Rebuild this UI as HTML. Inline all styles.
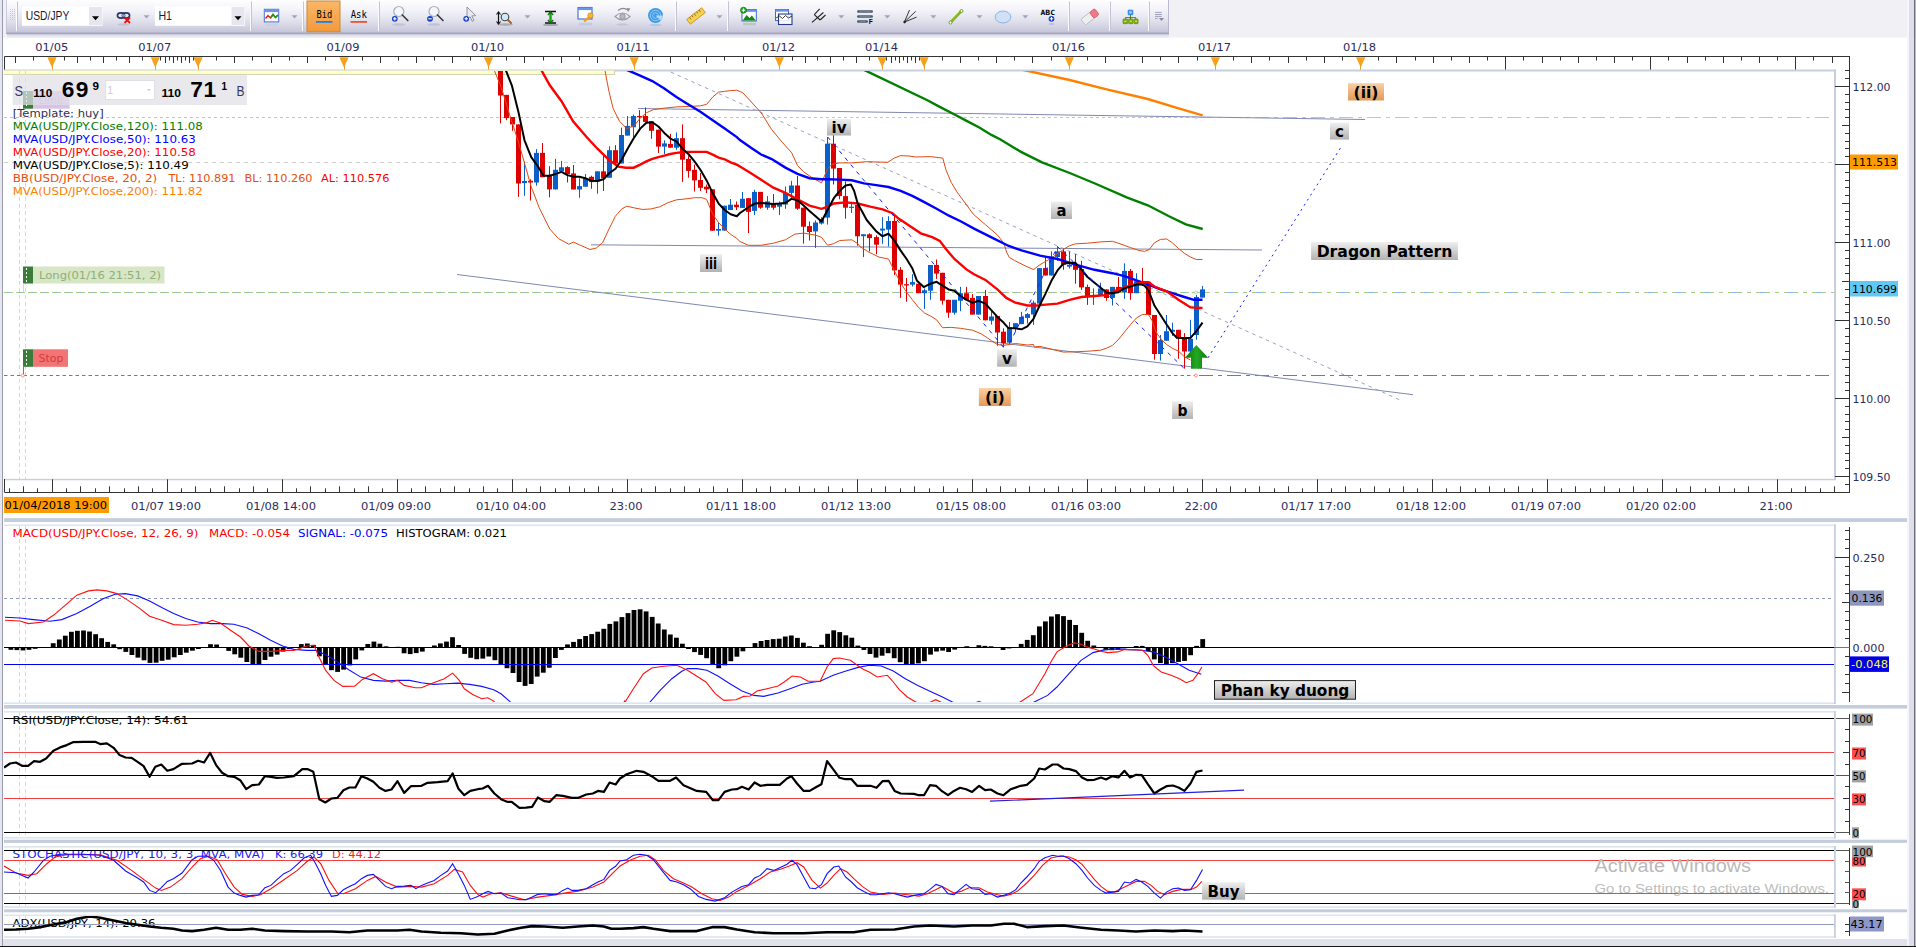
<!DOCTYPE html>
<html lang="en"><head><meta charset="utf-8"><title>USD/JPY H1 chart</title>
<style>html,body{margin:0;padding:0;background:#fff;overflow:hidden}svg{display:block}</style></head>
<body>
<svg width="1916" height="947" viewBox="0 0 1916 947" font-family="'DejaVu Sans', 'Liberation Sans', sans-serif" shape-rendering="auto">
<defs>
<linearGradient id="tb" x1="0" y1="0" x2="0" y2="1"><stop offset="0" stop-color="#fefeff"/><stop offset="0.3" stop-color="#f3f3f9"/><stop offset="0.62" stop-color="#e2e2ed"/><stop offset="1" stop-color="#c4c4d9"/></linearGradient>
<linearGradient id="gl" x1="0" y1="0" x2="0" y2="1"><stop offset="0" stop-color="#efefef"/><stop offset="1" stop-color="#b2b2b2"/></linearGradient>
<linearGradient id="ol" x1="0" y1="0" x2="0" y2="1"><stop offset="0" stop-color="#f8cfa4"/><stop offset="1" stop-color="#e39a58"/></linearGradient>
<linearGradient id="bid" x1="0" y1="0" x2="0" y2="1"><stop offset="0" stop-color="#fbb766"/><stop offset="1" stop-color="#f29a3c"/></linearGradient>
<linearGradient id="ga" x1="0" y1="0" x2="1" y2="0"><stop offset="0" stop-color="#0a7a0a"/><stop offset="0.5" stop-color="#22a822"/><stop offset="1" stop-color="#0a7a0a"/></linearGradient>
<clipPath id="cm"><rect x="4" y="71" width="1830" height="408"/></clipPath>
<clipPath id="cmacd"><rect x="4" y="525" width="1830" height="177"/></clipPath>
<clipPath id="crsi"><rect x="4" y="712" width="1830" height="125"/></clipPath>
<clipPath id="cst"><rect x="4" y="847" width="1830" height="59"/></clipPath>
<clipPath id="cadx"><rect x="4" y="916" width="1830" height="21"/></clipPath>
</defs>
<rect x="0" y="0" width="1916" height="947" fill="#fff" />
<rect x="0" y="0" width="1916" height="37.6" fill="#f0f0f5" />
<rect x="0" y="0" width="2" height="947" fill="#e6e6f0" />
<rect x="2" y="0" width="1" height="947" fill="#9a9aae" />
<rect x="1907" y="0" width="2" height="947" fill="#f6f6fa" />
<rect x="1909" y="0" width="5.5" height="947" fill="#dedeec" />
<rect x="1914.4" y="0" width="1.1" height="947" fill="#1c1c28" />
<rect x="1915.5" y="0" width="0.5" height="947" fill="#e8e8f0" />
<rect x="3" y="939" width="1904" height="7" fill="#e2e2ec" />
<rect x="0" y="946" width="1916" height="1" fill="#15151c" />
<g id="toolbar">
<rect x="7" y="33.8" width="1162" height="1.4" fill="#cdcddd"/><rect x="7" y="35.2" width="1162" height="1.2" fill="#dcdce8"/><rect x="7" y="36.4" width="1162" height="1.2" fill="#e8e8f0"/>
<rect x="6" y="0" width="1163" height="33" fill="url(#tb)"/>
<rect x="6" y="32.6" width="1163" height="1.3" fill="#9e9eba"/>
<rect x="1168.1" y="0" width="0.9" height="33" fill="#b4b4cb"/>
<rect x="6" y="0" width="0.8" height="33" fill="#c4c4d6"/>
<line x1="10.5" y1="9" x2="10.5" y2="21" stroke="#c3c3d3" stroke-width="1" stroke-dasharray="1,1"/>
<line x1="12.5" y1="9" x2="12.5" y2="21" stroke="#c3c3d3" stroke-width="1" stroke-dasharray="1,1"/>
<line x1="14.5" y1="9" x2="14.5" y2="21" stroke="#c3c3d3" stroke-width="1" stroke-dasharray="1,1"/>
<rect x="16" y="1.5" width="1" height="29.5" fill="#fbfbfe"/><rect x="17" y="1.5" width="1" height="29.5" fill="#c3c3d4"/>
<rect x="250" y="1.5" width="1" height="29.5" fill="#fbfbfe"/><rect x="251" y="1.5" width="1" height="29.5" fill="#c3c3d4"/>
<rect x="302" y="1.5" width="1" height="29.5" fill="#fbfbfe"/><rect x="303" y="1.5" width="1" height="29.5" fill="#c3c3d4"/>
<rect x="378" y="1.5" width="1" height="29.5" fill="#fbfbfe"/><rect x="379" y="1.5" width="1" height="29.5" fill="#c3c3d4"/>
<rect x="675" y="1.5" width="1" height="29.5" fill="#fbfbfe"/><rect x="676" y="1.5" width="1" height="29.5" fill="#c3c3d4"/>
<rect x="727" y="1.5" width="1" height="29.5" fill="#fbfbfe"/><rect x="728" y="1.5" width="1" height="29.5" fill="#c3c3d4"/>
<rect x="1068" y="1.5" width="1" height="29.5" fill="#fbfbfe"/><rect x="1069" y="1.5" width="1" height="29.5" fill="#c3c3d4"/>
<rect x="1109" y="1.5" width="1" height="29.5" fill="#fbfbfe"/><rect x="1110" y="1.5" width="1" height="29.5" fill="#c3c3d4"/>
<rect x="1148" y="1.5" width="1" height="29.5" fill="#fbfbfe"/><rect x="1149" y="1.5" width="1" height="29.5" fill="#c3c3d4"/>
<rect x="22" y="6.3" width="80.5" height="19.5" fill="#fff"/>
<rect x="89" y="7" width="13" height="18" fill="#e6e6ef"/>
<path d="M92 16.2 h7 l-3.5 4 Z" fill="#000"/>
<text x="25.8" y="20" font-size="12.5" fill="#17173a" textLength="43.5" lengthAdjust="spacingAndGlyphs" font-family="'Liberation Sans', sans-serif">USD/JPY</text>
<rect x="155" y="6.3" width="90" height="19.5" fill="#fff"/>
<rect x="231.5" y="7" width="13" height="18" fill="#e6e6ef"/>
<path d="M234.5 16.2 h7 l-3.5 4 Z" fill="#000"/>
<text x="158.5" y="20" font-size="12.5" fill="#17173a" textLength="13.5" lengthAdjust="spacingAndGlyphs" font-family="'Liberation Sans', sans-serif">H1</text>
<g><ellipse cx="121" cy="15.5" rx="3.6" ry="2.6" fill="none" stroke="#2a3560" stroke-width="1.6"/><ellipse cx="126" cy="15.5" rx="3.6" ry="2.6" fill="none" stroke="#2a3560" stroke-width="1.6"/><ellipse cx="123.5" cy="15.5" rx="2" ry="1.2" fill="#8aa0d0"/><path d="M124.5 17.5 l5.5 5.5 M130 17.5 l-5.5 5.5" stroke="#e81010" stroke-width="1.8"/><ellipse cx="123.5" cy="24.5" rx="6" ry="1.2" fill="#9aa0b8" opacity="0.4"/></g>
<path d="M143.5 15.3 h6 l-3 3.2 Z" fill="#a4a0c0"/>
<g><rect x="264.3" y="9.3" width="14.4" height="12.6" fill="#fff" stroke="#4a6fd0" stroke-width="1"/><rect x="264.3" y="9.3" width="14.4" height="2.8" fill="#6f94ea"/><polyline points="265.5,18.5 268,15.5 270.5,18 273,14.5 275.5,17.5 278,15" fill="none" stroke="#e02020" stroke-width="1.4"/><polyline points="270.5,18 273,14.5 275.5,17.5 278,15" fill="none" stroke="#10a010" stroke-width="1.4"/><rect x="265" y="23.5" width="13" height="2.5" fill="#c0c8e0" opacity="0.5"/></g>
<path d="M291.5 15.3 h6 l-3 3.2 Z" fill="#a4a0c0"/>
<rect x="307" y="1" width="33" height="30.8" fill="url(#bid)" stroke="#c68a3a" stroke-width="1"/>
<text x="316.6" y="18" font-size="9.8" fill="#000" textLength="15.7" lengthAdjust="spacingAndGlyphs" font-family="'DejaVu Sans Mono', 'Liberation Mono', monospace">Bid</text>
<rect x="316" y="21" width="16.5" height="1.8" fill="#1f7fee"/>
<text x="350.7" y="18" font-size="9.8" fill="#000" textLength="16.3" lengthAdjust="spacingAndGlyphs" font-family="'DejaVu Sans Mono', 'Liberation Mono', monospace">Ask</text>
<rect x="350.5" y="21" width="16.5" height="1.8" fill="#f4502a"/>
<g><circle cx="398.8" cy="11.5" r="5" fill="#f4f6fa" stroke="#aab0bc" stroke-width="1.2"/><path d="M402.3 15 l5.5 5.5" stroke="#3a3a3a" stroke-width="1.7" stroke-linecap="round"/><circle cx="394.8" cy="18.8" r="2.9" fill="#1540c8"/>
<path d="M393.1 18.8 h3.4" stroke="#fff" stroke-width="1.1"/>
<path d="M394.8 17.1 v3.4" stroke="#fff" stroke-width="1.1"/>
<ellipse cx="398.8" cy="24.5" rx="6.5" ry="1.3" fill="#8a90b0" opacity="0.3"/></g>
<g><circle cx="434" cy="11.5" r="5" fill="#f4f6fa" stroke="#aab0bc" stroke-width="1.2"/><path d="M437.5 15 l5.5 5.5" stroke="#3a3a3a" stroke-width="1.7" stroke-linecap="round"/><circle cx="430" cy="18.8" r="2.9" fill="#1540c8"/>
<path d="M428.3 18.8 h3.4" stroke="#fff" stroke-width="1.1"/>
<ellipse cx="434" cy="24.5" rx="6.5" ry="1.3" fill="#8a90b0" opacity="0.3"/></g>
<g><path d="M467 7 l0 12.5 3-2.8 2.2 4.6 1.8-.9 -2.2-4.5 4 -.3 Z" fill="#e8e8ee" stroke="#8a8a98" stroke-width="0.9"/><circle cx="466.2" cy="18.8" r="2.9" fill="#1540c8"/><path d="M464.5 18.8 h3.4 M466.2 17.1 v3.4" stroke="#fff" stroke-width="1.1"/></g>
<g><path d="M498.5 12.5 v11" stroke="#111" stroke-width="1.2"/><path d="M496.5 14.5 l2-2.5 2 2.5 M496.5 21.5 l2 2.5 2-2.5" fill="none" stroke="#111" stroke-width="1.1"/><circle cx="505" cy="17" r="3.8" fill="#cfe8fb" stroke="#444" stroke-width="1.1"/><path d="M508 20 l3 3" stroke="#b05a10" stroke-width="1.8" stroke-linecap="round"/><ellipse cx="505" cy="24.5" rx="8" ry="1.2" fill="#555" opacity="0.35"/></g>
<path d="M524.5 15.3 h6 l-3 3.2 Z" fill="#a4a0c0"/>
<g><path d="M545 11.5 h11 M545 23 h11" stroke="#111" stroke-width="1.3"/><path d="M550.5 12 v11" stroke="#18a018" stroke-width="2.4"/><path d="M547.8 15 l2.7-3 2.7 3 M547.8 20 l2.7 3 2.7-3" fill="none" stroke="#0c700c" stroke-width="1.2"/><ellipse cx="550.5" cy="24.8" rx="8" ry="1.2" fill="#444" opacity="0.35"/></g>
<g><rect x="578" y="7.5" width="14" height="11.5" fill="#fff" stroke="#3c68d8" stroke-width="1.1"/><rect x="578" y="7.5" width="14" height="2.6" fill="#6c94ec"/><circle cx="590.5" cy="15.5" r="2.6" fill="#f8b830" stroke="#d08a10" stroke-width="0.8"/><path d="M588.8 17.3 l-4 3.5" stroke="#f0a020" stroke-width="2.2" stroke-linecap="round"/><rect x="579" y="22.8" width="13" height="2.5" fill="#a8b8e0" opacity="0.45"/></g>
<g><path d="M615 16.5 q7.5-7 15 0 q-7.5 7-15 0 Z" fill="#f0f0f3" stroke="#9a9aa6" stroke-width="1.1"/><circle cx="622.5" cy="16.5" r="2.8" fill="#b8b8c2" stroke="#8c8c98" stroke-width="0.8"/><path d="M618 10.5 q5-4 10-0.5" fill="none" stroke="#8c8c98" stroke-width="1.2"/><path d="M626.5 8 l4 0.5 -2.5 3.5 Z" fill="#8c8c98"/><ellipse cx="622.5" cy="24.5" rx="6" ry="1.2" fill="#999" opacity="0.3"/></g>
<g><circle cx="655.5" cy="15.5" r="7.5" fill="#3d9be6"/><circle cx="655.5" cy="15.5" r="5.2" fill="none" stroke="#9fd0f6" stroke-width="0.9"/><circle cx="655.5" cy="15.5" r="2.8" fill="none" stroke="#9fd0f6" stroke-width="0.9"/><path d="M655.5 15.5 L661 21 A7.5 7.5 0 0 0 663 15.5 Z" fill="#bfe2fb" opacity="0.85"/><ellipse cx="655.5" cy="25" rx="6.5" ry="1.2" fill="#6aa8e0" opacity="0.35"/></g>
<g transform="rotate(-38 696 16)"><rect x="686.5" y="13" width="19" height="6" fill="#f6cf55" stroke="#c89a1a" stroke-width="0.9"/><path d="M690 13 v2.6 M693 13 v2 M696 13 v2.6 M699 13 v2 M702 13 v2.6" stroke="#7a5a08" stroke-width="0.8"/></g>
<path d="M716.5 15.3 h6 l-3 3.2 Z" fill="#a4a0c0"/>
<g><rect x="742" y="9.5" width="14.3" height="11.5" fill="#fff" stroke="#3a66d6" stroke-width="1"/><rect x="742" y="9.5" width="14.3" height="2.4" fill="#6c94ec"/><path d="M742.6 20.5 l4-5.5 3 3 2.2-2.5 4 5 Z" fill="#138a13"/><circle cx="743.5" cy="10.2" r="3" fill="#22b022" stroke="#0a700a" stroke-width="0.7"/><path d="M741.8 10.2 h3.4 M743.5 8.5 v3.4" stroke="#fff" stroke-width="1"/><rect x="743" y="22.8" width="13" height="2.5" fill="#7fb87f" opacity="0.4"/></g>
<g><rect x="775.5" y="9.5" width="13" height="11" fill="#fff" stroke="#3a66d6" stroke-width="1"/><rect x="775.5" y="9.5" width="13" height="2.2" fill="#6c94ec"/><rect x="778.5" y="14" width="13.5" height="10.5" fill="#fff" fill-opacity="0.85" stroke="#273a8a" stroke-width="1.1"/><polyline points="776,18 779.5,16 782.5,18.5 785.5,15.5 788.5,18 792,16" fill="none" stroke="#222" stroke-width="0.9"/></g>
<g stroke="#222" stroke-width="1.1" fill="none"><path d="M812 22.4 L823.4 12.5"/><path d="M814.3 14.6 L820.1 20"/><path d="M814.3 14.6 L819.7 8.8"/><path d="M820.1 20 L825.5 15"/></g>
<path d="M838.3 15.3 h6 l-3 3.2 Z" fill="#a4a0c0"/>
<g><rect x="857" y="10.2" width="16" height="2.6" rx="1.3" fill="#4d5b6c"/><rect x="857" y="15.2" width="16" height="2.6" rx="1.3" fill="#4d5b6c"/><rect x="857" y="20.2" width="11" height="2.6" rx="1.3" fill="#4d5b6c"/><path d="M859.5 11.5 h11 M859.5 16.5 h11 M859.5 21.5 h6" stroke="#8a98a8" stroke-width="0.6"/><text x="868.7" y="23.8" font-size="6.5" font-weight="bold" fill="#000" font-family="'Liberation Sans', sans-serif">F</text></g>
<path d="M884.3 15.3 h6 l-3 3.2 Z" fill="#a4a0c0"/>
<g stroke="#222" stroke-width="0.9" fill="none"><path d="M904.4 22.1 L909.5 10"/><path d="M904.4 22.1 L915.7 11.3"/><path d="M904.4 22.1 L916.6 17.1"/><circle cx="904.6" cy="22" r="0.9" fill="#222"/></g>
<path d="M930.4 15.3 h6 l-3 3.2 Z" fill="#a4a0c0"/>
<g><path d="M950.5 22.5 L961.5 11" stroke="#86b81a" stroke-width="2.6" stroke-linecap="round"/><circle cx="950.5" cy="22.5" r="1.5" fill="#fff" stroke="#5a8a0a" stroke-width="0.8"/><circle cx="961.5" cy="11" r="1.5" fill="#fff" stroke="#5a8a0a" stroke-width="0.8"/></g>
<path d="M976.5 15.3 h6 l-3 3.2 Z" fill="#a4a0c0"/>
<ellipse cx="1003" cy="17" rx="7.8" ry="6" fill="#cfe0f7" stroke="#8fb4e6" stroke-width="1"/>
<path d="M1022.3 15.3 h6 l-3 3.2 Z" fill="#a4a0c0"/>
<g><text x="1040.5" y="15" font-size="7.2" font-weight="bold" fill="#000" textLength="14.5" lengthAdjust="spacingAndGlyphs" font-family="'DejaVu Sans Mono', 'Liberation Mono', monospace">ABC</text><circle cx="1051.5" cy="18.8" r="2.9" fill="#1540c8"/><path d="M1049.8 18.8 h3.4 M1051.5 17.1 v3.4" stroke="#fff" stroke-width="1.1"/><ellipse cx="1051.5" cy="24" rx="3" ry="1" fill="#8a90d0" opacity="0.4"/></g>
<g transform="rotate(-38 1090 16.5)"><rect x="1081" y="13" width="12.5" height="7.5" rx="1.6" fill="#eeeeee" stroke="#b8b8b8" stroke-width="0.8"/><rect x="1092" y="13" width="6.5" height="7.5" rx="1.6" fill="#ee7a86" stroke="#d05a68" stroke-width="0.8"/></g>
<g><rect x="1128" y="10" width="5" height="4.9" rx="0.6" fill="#3d97ee" stroke="#2a7ad8" stroke-width="0.5"/><rect x="1129.3" y="11.2" width="2.4" height="2.2" fill="#bfe0fb" opacity="0.8"/><path d="M1130.5 14.9 v2.7 M1125.4 19.2 v-1.6 h10.4 v1.6 M1130.5 17.6 v1.6" fill="none" stroke="#4f6e06" stroke-width="0.9"/><rect x="1123" y="19" width="4.7" height="4.7" rx="0.6" fill="#7fb012" stroke="#5b8208" stroke-width="0.6"/><rect x="1128.6" y="19" width="4.4" height="4.7" rx="0.6" fill="#7fb012" stroke="#5b8208" stroke-width="0.6"/><rect x="1133.9" y="19" width="4.2" height="4.7" rx="0.6" fill="#7fb012" stroke="#5b8208" stroke-width="0.6"/><path d="M1124.3 21.3 h2 M1129.8 21.3 h2 M1135 21.3 h2" stroke="#d8efa0" stroke-width="1"/></g>
<g stroke="#9a9ab2" stroke-width="0.9"><path d="M1155 12.4 h6.8 M1155 14.5 h6.8 M1155 16.4 h6.8 M1155 18.4 h2.7"/><path d="M1159 18 h5 l-2.5 2.9 Z" fill="#8888a2" stroke="none"/></g>
</g>
<g id="topaxis">
<line x1="4.5" y1="56.5" x2="1850" y2="56.5" stroke="#333" stroke-width="1" />
<line x1="4.5" y1="56.5" x2="4.5" y2="70" stroke="#333" stroke-width="1" />
<line x1="33.5" y1="57" x2="33.5" y2="60.5" stroke="#333" stroke-width="1" />
<line x1="15.5" y1="57" x2="15.5" y2="63" stroke="#333" stroke-width="1" />
<line x1="64.5" y1="57" x2="64.5" y2="60.5" stroke="#333" stroke-width="1" />
<line x1="77.5" y1="57" x2="77.5" y2="63" stroke="#333" stroke-width="1" />
<line x1="90.5" y1="57" x2="90.5" y2="60.5" stroke="#333" stroke-width="1" />
<line x1="103.5" y1="57" x2="103.5" y2="63" stroke="#333" stroke-width="1" />
<line x1="116.5" y1="57" x2="116.5" y2="60.5" stroke="#333" stroke-width="1" />
<line x1="129.5" y1="57" x2="129.5" y2="63" stroke="#333" stroke-width="1" />
<line x1="142.5" y1="57" x2="142.5" y2="60.5" stroke="#333" stroke-width="1" />
<line x1="216.5" y1="57" x2="216.5" y2="60.5" stroke="#333" stroke-width="1" />
<line x1="234.5" y1="57" x2="234.5" y2="63" stroke="#333" stroke-width="1" />
<line x1="252.5" y1="57" x2="252.5" y2="60.5" stroke="#333" stroke-width="1" />
<line x1="271.5" y1="57" x2="271.5" y2="63" stroke="#333" stroke-width="1" />
<line x1="289.5" y1="57" x2="289.5" y2="60.5" stroke="#333" stroke-width="1" />
<line x1="307.5" y1="57" x2="307.5" y2="63" stroke="#333" stroke-width="1" />
<line x1="325.5" y1="57" x2="325.5" y2="60.5" stroke="#333" stroke-width="1" />
<line x1="362.5" y1="57" x2="362.5" y2="60.5" stroke="#333" stroke-width="1" />
<line x1="380.5" y1="57" x2="380.5" y2="63" stroke="#333" stroke-width="1" />
<line x1="398.5" y1="57" x2="398.5" y2="60.5" stroke="#333" stroke-width="1" />
<line x1="416.5" y1="57" x2="416.5" y2="63" stroke="#333" stroke-width="1" />
<line x1="434.5" y1="57" x2="434.5" y2="60.5" stroke="#333" stroke-width="1" />
<line x1="452.5" y1="57" x2="452.5" y2="63" stroke="#333" stroke-width="1" />
<line x1="470.5" y1="57" x2="470.5" y2="60.5" stroke="#333" stroke-width="1" />
<line x1="506.5" y1="57" x2="506.5" y2="60.5" stroke="#333" stroke-width="1" />
<line x1="524.5" y1="57" x2="524.5" y2="63" stroke="#333" stroke-width="1" />
<line x1="543.5" y1="57" x2="543.5" y2="60.5" stroke="#333" stroke-width="1" />
<line x1="561.5" y1="57" x2="561.5" y2="63" stroke="#333" stroke-width="1" />
<line x1="579.5" y1="57" x2="579.5" y2="60.5" stroke="#333" stroke-width="1" />
<line x1="597.5" y1="57" x2="597.5" y2="63" stroke="#333" stroke-width="1" />
<line x1="615.5" y1="57" x2="615.5" y2="60.5" stroke="#333" stroke-width="1" />
<line x1="652.5" y1="57" x2="652.5" y2="60.5" stroke="#333" stroke-width="1" />
<line x1="670.5" y1="57" x2="670.5" y2="63" stroke="#333" stroke-width="1" />
<line x1="688.5" y1="57" x2="688.5" y2="60.5" stroke="#333" stroke-width="1" />
<line x1="706.5" y1="57" x2="706.5" y2="63" stroke="#333" stroke-width="1" />
<line x1="724.5" y1="57" x2="724.5" y2="60.5" stroke="#333" stroke-width="1" />
<line x1="743.5" y1="57" x2="743.5" y2="63" stroke="#333" stroke-width="1" />
<line x1="761.5" y1="57" x2="761.5" y2="60.5" stroke="#333" stroke-width="1" />
<line x1="792.5" y1="57" x2="792.5" y2="60.5" stroke="#333" stroke-width="1" />
<line x1="805.5" y1="57" x2="805.5" y2="63" stroke="#333" stroke-width="1" />
<line x1="817.5" y1="57" x2="817.5" y2="60.5" stroke="#333" stroke-width="1" />
<line x1="830.5" y1="57" x2="830.5" y2="63" stroke="#333" stroke-width="1" />
<line x1="843.5" y1="57" x2="843.5" y2="60.5" stroke="#333" stroke-width="1" />
<line x1="856.5" y1="57" x2="856.5" y2="63" stroke="#333" stroke-width="1" />
<line x1="869.5" y1="57" x2="869.5" y2="60.5" stroke="#333" stroke-width="1" />
<line x1="942.5" y1="57" x2="942.5" y2="60.5" stroke="#333" stroke-width="1" />
<line x1="960.5" y1="57" x2="960.5" y2="63" stroke="#333" stroke-width="1" />
<line x1="978.5" y1="57" x2="978.5" y2="60.5" stroke="#333" stroke-width="1" />
<line x1="996.5" y1="57" x2="996.5" y2="63" stroke="#333" stroke-width="1" />
<line x1="1014.5" y1="57" x2="1014.5" y2="60.5" stroke="#333" stroke-width="1" />
<line x1="1032.5" y1="57" x2="1032.5" y2="63" stroke="#333" stroke-width="1" />
<line x1="1051.5" y1="57" x2="1051.5" y2="60.5" stroke="#333" stroke-width="1" />
<line x1="1087.5" y1="57" x2="1087.5" y2="60.5" stroke="#333" stroke-width="1" />
<line x1="1105.5" y1="57" x2="1105.5" y2="63" stroke="#333" stroke-width="1" />
<line x1="1124.5" y1="57" x2="1124.5" y2="60.5" stroke="#333" stroke-width="1" />
<line x1="1142.5" y1="57" x2="1142.5" y2="63" stroke="#333" stroke-width="1" />
<line x1="1160.5" y1="57" x2="1160.5" y2="60.5" stroke="#333" stroke-width="1" />
<line x1="1178.5" y1="57" x2="1178.5" y2="63" stroke="#333" stroke-width="1" />
<line x1="1197.5" y1="57" x2="1197.5" y2="60.5" stroke="#333" stroke-width="1" />
<line x1="1233.5" y1="57" x2="1233.5" y2="60.5" stroke="#333" stroke-width="1" />
<line x1="1251.5" y1="57" x2="1251.5" y2="63" stroke="#333" stroke-width="1" />
<line x1="1269.5" y1="57" x2="1269.5" y2="60.5" stroke="#333" stroke-width="1" />
<line x1="1288.5" y1="57" x2="1288.5" y2="63" stroke="#333" stroke-width="1" />
<line x1="1306.5" y1="57" x2="1306.5" y2="60.5" stroke="#333" stroke-width="1" />
<line x1="1324.5" y1="57" x2="1324.5" y2="63" stroke="#333" stroke-width="1" />
<line x1="1342.5" y1="57" x2="1342.5" y2="60.5" stroke="#333" stroke-width="1" />
<line x1="160.5" y1="57" x2="160.5" y2="60.5" stroke="#333" stroke-width="1" />
<line x1="165.5" y1="57" x2="165.5" y2="63" stroke="#333" stroke-width="1" />
<line x1="169.5" y1="57" x2="169.5" y2="60.5" stroke="#333" stroke-width="1" />
<line x1="173.5" y1="57" x2="173.5" y2="63" stroke="#333" stroke-width="1" />
<line x1="177.5" y1="57" x2="177.5" y2="60.5" stroke="#333" stroke-width="1" />
<line x1="181.5" y1="57" x2="181.5" y2="63" stroke="#333" stroke-width="1" />
<line x1="185.5" y1="57" x2="185.5" y2="60.5" stroke="#333" stroke-width="1" />
<line x1="189.5" y1="57" x2="189.5" y2="63" stroke="#333" stroke-width="1" />
<line x1="193.5" y1="57" x2="193.5" y2="60.5" stroke="#333" stroke-width="1" />
<line x1="886.5" y1="57" x2="886.5" y2="60.5" stroke="#333" stroke-width="1" />
<line x1="891.5" y1="57" x2="891.5" y2="63" stroke="#333" stroke-width="1" />
<line x1="895.5" y1="57" x2="895.5" y2="60.5" stroke="#333" stroke-width="1" />
<line x1="899.5" y1="57" x2="899.5" y2="63" stroke="#333" stroke-width="1" />
<line x1="903.5" y1="57" x2="903.5" y2="60.5" stroke="#333" stroke-width="1" />
<line x1="907.5" y1="57" x2="907.5" y2="63" stroke="#333" stroke-width="1" />
<line x1="911.5" y1="57" x2="911.5" y2="60.5" stroke="#333" stroke-width="1" />
<line x1="915.5" y1="57" x2="915.5" y2="63" stroke="#333" stroke-width="1" />
<line x1="919.5" y1="57" x2="919.5" y2="60.5" stroke="#333" stroke-width="1" />
<line x1="1378.5" y1="57" x2="1378.5" y2="60.5" stroke="#333" stroke-width="1" />
<line x1="1396.5" y1="57" x2="1396.5" y2="63" stroke="#333" stroke-width="1" />
<line x1="1415.5" y1="57" x2="1415.5" y2="60.5" stroke="#333" stroke-width="1" />
<line x1="1433.5" y1="57" x2="1433.5" y2="63" stroke="#333" stroke-width="1" />
<line x1="1451.5" y1="57" x2="1451.5" y2="60.5" stroke="#333" stroke-width="1" />
<line x1="1469.5" y1="57" x2="1469.5" y2="63" stroke="#333" stroke-width="1" />
<line x1="1487.5" y1="57" x2="1487.5" y2="60.5" stroke="#333" stroke-width="1" />
<line x1="1505.5" y1="57" x2="1505.5" y2="70" stroke="#333" stroke-width="1" />
<line x1="1523.5" y1="57" x2="1523.5" y2="60.5" stroke="#333" stroke-width="1" />
<line x1="1542.5" y1="57" x2="1542.5" y2="63" stroke="#333" stroke-width="1" />
<line x1="1560.5" y1="57" x2="1560.5" y2="60.5" stroke="#333" stroke-width="1" />
<line x1="1578.5" y1="57" x2="1578.5" y2="63" stroke="#333" stroke-width="1" />
<line x1="1596.5" y1="57" x2="1596.5" y2="60.5" stroke="#333" stroke-width="1" />
<line x1="1614.5" y1="57" x2="1614.5" y2="63" stroke="#333" stroke-width="1" />
<line x1="1632.5" y1="57" x2="1632.5" y2="60.5" stroke="#333" stroke-width="1" />
<line x1="1650.5" y1="57" x2="1650.5" y2="70" stroke="#333" stroke-width="1" />
<line x1="1668.5" y1="57" x2="1668.5" y2="60.5" stroke="#333" stroke-width="1" />
<line x1="1687.5" y1="57" x2="1687.5" y2="63" stroke="#333" stroke-width="1" />
<line x1="1705.5" y1="57" x2="1705.5" y2="60.5" stroke="#333" stroke-width="1" />
<line x1="1723.5" y1="57" x2="1723.5" y2="63" stroke="#333" stroke-width="1" />
<line x1="1741.5" y1="57" x2="1741.5" y2="60.5" stroke="#333" stroke-width="1" />
<line x1="1759.5" y1="57" x2="1759.5" y2="63" stroke="#333" stroke-width="1" />
<line x1="1777.5" y1="57" x2="1777.5" y2="60.5" stroke="#333" stroke-width="1" />
<line x1="1795.5" y1="57" x2="1795.5" y2="70" stroke="#333" stroke-width="1" />
<line x1="1813.5" y1="57" x2="1813.5" y2="60.5" stroke="#333" stroke-width="1" />
<line x1="1832.5" y1="57" x2="1832.5" y2="63" stroke="#333" stroke-width="1" />
<path d="M47.4 57.3 L56.6 57.3 L52 67.6 Z" fill="#f7a21b"/>
<line x1="52.5" y1="60" x2="52.5" y2="70" stroke="#f0a020" stroke-width="1" />
<path d="M150.7 57.3 L159.9 57.3 L155.3 67.6 Z" fill="#f7a21b"/>
<line x1="155.5" y1="60" x2="155.5" y2="70" stroke="#f0a020" stroke-width="1" />
<path d="M193.4 57.3 L202.6 57.3 L198 67.6 Z" fill="#f7a21b"/>
<line x1="198.5" y1="60" x2="198.5" y2="70" stroke="#f0a020" stroke-width="1" />
<path d="M339.4 57.3 L348.6 57.3 L344 67.6 Z" fill="#f7a21b"/>
<line x1="344.5" y1="60" x2="344.5" y2="70" stroke="#f0a020" stroke-width="1" />
<path d="M483.9 57.3 L493.1 57.3 L488.5 67.6 Z" fill="#f7a21b"/>
<line x1="488.5" y1="60" x2="488.5" y2="70" stroke="#f0a020" stroke-width="1" />
<path d="M629.6 57.3 L638.8 57.3 L634.2 67.6 Z" fill="#f7a21b"/>
<line x1="634.5" y1="60" x2="634.5" y2="70" stroke="#f0a020" stroke-width="1" />
<path d="M774.8 57.3 L784 57.3 L779.4 67.6 Z" fill="#f7a21b"/>
<line x1="779.5" y1="60" x2="779.5" y2="70" stroke="#f0a020" stroke-width="1" />
<path d="M877.6 57.3 L886.8 57.3 L882.2 67.6 Z" fill="#f7a21b"/>
<line x1="882.5" y1="60" x2="882.5" y2="70" stroke="#f0a020" stroke-width="1" />
<path d="M919.4 57.3 L928.6 57.3 L924 67.6 Z" fill="#f7a21b"/>
<line x1="924.5" y1="60" x2="924.5" y2="70" stroke="#f0a020" stroke-width="1" />
<path d="M1064.7 57.3 L1073.9 57.3 L1069.3 67.6 Z" fill="#f7a21b"/>
<line x1="1069.5" y1="60" x2="1069.5" y2="70" stroke="#f0a020" stroke-width="1" />
<path d="M1210.8 57.3 L1220 57.3 L1215.4 67.6 Z" fill="#f7a21b"/>
<line x1="1215.5" y1="60" x2="1215.5" y2="70" stroke="#f0a020" stroke-width="1" />
<path d="M1356.1 57.3 L1365.3 57.3 L1360.7 67.6 Z" fill="#f7a21b"/>
<line x1="1360.5" y1="60" x2="1360.5" y2="70" stroke="#f0a020" stroke-width="1" />
<text x="51.8" y="51" font-size="11" fill="#2b2b5e" textLength="33" lengthAdjust="spacingAndGlyphs" text-anchor="middle" >01/05</text>
<text x="154.8" y="51" font-size="11" fill="#2b2b5e" textLength="33" lengthAdjust="spacingAndGlyphs" text-anchor="middle" >01/07</text>
<text x="343" y="51" font-size="11" fill="#2b2b5e" textLength="33" lengthAdjust="spacingAndGlyphs" text-anchor="middle" >01/09</text>
<text x="487.5" y="51" font-size="11" fill="#2b2b5e" textLength="33" lengthAdjust="spacingAndGlyphs" text-anchor="middle" >01/10</text>
<text x="633" y="51" font-size="11" fill="#2b2b5e" textLength="33" lengthAdjust="spacingAndGlyphs" text-anchor="middle" >01/11</text>
<text x="778.5" y="51" font-size="11" fill="#2b2b5e" textLength="33" lengthAdjust="spacingAndGlyphs" text-anchor="middle" >01/12</text>
<text x="881.5" y="51" font-size="11" fill="#2b2b5e" textLength="33" lengthAdjust="spacingAndGlyphs" text-anchor="middle" >01/14</text>
<text x="1068.5" y="51" font-size="11" fill="#2b2b5e" textLength="33" lengthAdjust="spacingAndGlyphs" text-anchor="middle" >01/16</text>
<text x="1214.5" y="51" font-size="11" fill="#2b2b5e" textLength="33" lengthAdjust="spacingAndGlyphs" text-anchor="middle" >01/17</text>
<text x="1359.5" y="51" font-size="11" fill="#2b2b5e" textLength="33" lengthAdjust="spacingAndGlyphs" text-anchor="middle" >01/18</text>
</g>
<g id="main">
<rect x="4" y="69.5" width="1832" height="2" fill="#c5cfdf" />
<rect x="1834" y="69.5" width="2" height="410.5" fill="#c5cfdf" />
<rect x="4" y="478.8" width="1832" height="1.5" fill="#c5cfdf" />
<rect x="4" y="70.5" width="610.5" height="4" fill="#ffffc6" />
<line x1="4" y1="74.5" x2="614.5" y2="74.5" stroke="#c9c9b0" stroke-width="0.8" />
<line x1="614.5" y1="70.5" x2="614.5" y2="75" stroke="#c9c9b0" stroke-width="0.8" />
<line x1="1849.5" y1="56.5" x2="1849.5" y2="492.5" stroke="#333" stroke-width="1" />
<line x1="1845" y1="70.5" x2="1849.5" y2="70.5" stroke="#333" stroke-width="1" />
<line x1="1845" y1="78.5" x2="1849.5" y2="78.5" stroke="#333" stroke-width="1" />
<line x1="1835" y1="86.5" x2="1849.5" y2="86.5" stroke="#333" stroke-width="1" />
<line x1="1845" y1="94.5" x2="1849.5" y2="94.5" stroke="#333" stroke-width="1" />
<line x1="1845" y1="102.5" x2="1849.5" y2="102.5" stroke="#333" stroke-width="1" />
<line x1="1845" y1="109.5" x2="1849.5" y2="109.5" stroke="#333" stroke-width="1" />
<line x1="1845" y1="117.5" x2="1849.5" y2="117.5" stroke="#333" stroke-width="1" />
<line x1="1842" y1="125.5" x2="1849.5" y2="125.5" stroke="#333" stroke-width="1" />
<line x1="1845" y1="133.5" x2="1849.5" y2="133.5" stroke="#333" stroke-width="1" />
<line x1="1845" y1="141.5" x2="1849.5" y2="141.5" stroke="#333" stroke-width="1" />
<line x1="1845" y1="148.5" x2="1849.5" y2="148.5" stroke="#333" stroke-width="1" />
<line x1="1845" y1="156.5" x2="1849.5" y2="156.5" stroke="#333" stroke-width="1" />
<line x1="1835" y1="164.5" x2="1849.5" y2="164.5" stroke="#333" stroke-width="1" />
<line x1="1845" y1="172.5" x2="1849.5" y2="172.5" stroke="#333" stroke-width="1" />
<line x1="1845" y1="180.5" x2="1849.5" y2="180.5" stroke="#333" stroke-width="1" />
<line x1="1845" y1="187.5" x2="1849.5" y2="187.5" stroke="#333" stroke-width="1" />
<line x1="1845" y1="195.5" x2="1849.5" y2="195.5" stroke="#333" stroke-width="1" />
<line x1="1842" y1="203.5" x2="1849.5" y2="203.5" stroke="#333" stroke-width="1" />
<line x1="1845" y1="211.5" x2="1849.5" y2="211.5" stroke="#333" stroke-width="1" />
<line x1="1845" y1="219.5" x2="1849.5" y2="219.5" stroke="#333" stroke-width="1" />
<line x1="1845" y1="226.5" x2="1849.5" y2="226.5" stroke="#333" stroke-width="1" />
<line x1="1845" y1="234.5" x2="1849.5" y2="234.5" stroke="#333" stroke-width="1" />
<line x1="1835" y1="242.5" x2="1849.5" y2="242.5" stroke="#333" stroke-width="1" />
<line x1="1845" y1="250.5" x2="1849.5" y2="250.5" stroke="#333" stroke-width="1" />
<line x1="1845" y1="258.5" x2="1849.5" y2="258.5" stroke="#333" stroke-width="1" />
<line x1="1845" y1="265.5" x2="1849.5" y2="265.5" stroke="#333" stroke-width="1" />
<line x1="1845" y1="273.5" x2="1849.5" y2="273.5" stroke="#333" stroke-width="1" />
<line x1="1842" y1="281.5" x2="1849.5" y2="281.5" stroke="#333" stroke-width="1" />
<line x1="1845" y1="289.5" x2="1849.5" y2="289.5" stroke="#333" stroke-width="1" />
<line x1="1845" y1="297.5" x2="1849.5" y2="297.5" stroke="#333" stroke-width="1" />
<line x1="1845" y1="304.5" x2="1849.5" y2="304.5" stroke="#333" stroke-width="1" />
<line x1="1845" y1="312.5" x2="1849.5" y2="312.5" stroke="#333" stroke-width="1" />
<line x1="1835" y1="320.5" x2="1849.5" y2="320.5" stroke="#333" stroke-width="1" />
<line x1="1845" y1="328.5" x2="1849.5" y2="328.5" stroke="#333" stroke-width="1" />
<line x1="1845" y1="336.5" x2="1849.5" y2="336.5" stroke="#333" stroke-width="1" />
<line x1="1845" y1="343.5" x2="1849.5" y2="343.5" stroke="#333" stroke-width="1" />
<line x1="1845" y1="351.5" x2="1849.5" y2="351.5" stroke="#333" stroke-width="1" />
<line x1="1842" y1="359.5" x2="1849.5" y2="359.5" stroke="#333" stroke-width="1" />
<line x1="1845" y1="367.5" x2="1849.5" y2="367.5" stroke="#333" stroke-width="1" />
<line x1="1845" y1="375.5" x2="1849.5" y2="375.5" stroke="#333" stroke-width="1" />
<line x1="1845" y1="382.5" x2="1849.5" y2="382.5" stroke="#333" stroke-width="1" />
<line x1="1845" y1="390.5" x2="1849.5" y2="390.5" stroke="#333" stroke-width="1" />
<line x1="1835" y1="398.5" x2="1849.5" y2="398.5" stroke="#333" stroke-width="1" />
<line x1="1845" y1="406.5" x2="1849.5" y2="406.5" stroke="#333" stroke-width="1" />
<line x1="1845" y1="414.5" x2="1849.5" y2="414.5" stroke="#333" stroke-width="1" />
<line x1="1845" y1="421.5" x2="1849.5" y2="421.5" stroke="#333" stroke-width="1" />
<line x1="1845" y1="429.5" x2="1849.5" y2="429.5" stroke="#333" stroke-width="1" />
<line x1="1842" y1="437.5" x2="1849.5" y2="437.5" stroke="#333" stroke-width="1" />
<line x1="1845" y1="445.5" x2="1849.5" y2="445.5" stroke="#333" stroke-width="1" />
<line x1="1845" y1="453.5" x2="1849.5" y2="453.5" stroke="#333" stroke-width="1" />
<line x1="1845" y1="460.5" x2="1849.5" y2="460.5" stroke="#333" stroke-width="1" />
<line x1="1845" y1="468.5" x2="1849.5" y2="468.5" stroke="#333" stroke-width="1" />
<line x1="1835" y1="476.5" x2="1849.5" y2="476.5" stroke="#333" stroke-width="1" />
<line x1="1845" y1="484.5" x2="1849.5" y2="484.5" stroke="#333" stroke-width="1" />
<text x="1852.5" y="91" font-size="11" fill="#2b2b5e" textLength="38" lengthAdjust="spacingAndGlyphs" >112.00</text>
<text x="1852.5" y="247" font-size="11" fill="#2b2b5e" textLength="38" lengthAdjust="spacingAndGlyphs" >111.00</text>
<text x="1852.5" y="325" font-size="11" fill="#2b2b5e" textLength="38" lengthAdjust="spacingAndGlyphs" >110.50</text>
<text x="1852.5" y="403" font-size="11" fill="#2b2b5e" textLength="38" lengthAdjust="spacingAndGlyphs" >110.00</text>
<text x="1852.5" y="481" font-size="11" fill="#2b2b5e" textLength="38" lengthAdjust="spacingAndGlyphs" >109.50</text>
<rect x="1850" y="154.5" width="48" height="15" fill="#ff9a00" />
<text x="1852" y="166" font-size="11" fill="#000" textLength="45" lengthAdjust="spacingAndGlyphs" >111.513</text>
<rect x="1850" y="281" width="48" height="15.5" fill="#5fc8f5" />
<text x="1852" y="292.8" font-size="11" fill="#000" textLength="45" lengthAdjust="spacingAndGlyphs" >110.699</text>
<line x1="19.5" y1="71" x2="19.5" y2="479" stroke="#d8d8d8" stroke-width="1" stroke-dasharray="4,3"/>
<line x1="25.5" y1="71" x2="25.5" y2="479" stroke="#d8d8d8" stroke-width="1" stroke-dasharray="4,3"/>
<line x1="19.5" y1="525" x2="19.5" y2="702" stroke="#d8d8d8" stroke-width="1" stroke-dasharray="4,3"/>
<line x1="25.5" y1="525" x2="25.5" y2="702" stroke="#d8d8d8" stroke-width="1" stroke-dasharray="4,3"/>
<line x1="19.5" y1="712" x2="19.5" y2="837" stroke="#d8d8d8" stroke-width="1" stroke-dasharray="4,3"/>
<line x1="25.5" y1="712" x2="25.5" y2="837" stroke="#d8d8d8" stroke-width="1" stroke-dasharray="4,3"/>
<line x1="19.5" y1="847" x2="19.5" y2="906" stroke="#d8d8d8" stroke-width="1" stroke-dasharray="4,3"/>
<line x1="25.5" y1="847" x2="25.5" y2="906" stroke="#d8d8d8" stroke-width="1" stroke-dasharray="4,3"/>
<line x1="19.5" y1="916" x2="19.5" y2="937" stroke="#d8d8d8" stroke-width="1" stroke-dasharray="4,3"/>
<line x1="25.5" y1="916" x2="25.5" y2="937" stroke="#d8d8d8" stroke-width="1" stroke-dasharray="4,3"/>
<g clip-path="url(#cm)">
<line x1="4" y1="117.5" x2="1196" y2="117.5" stroke="#d9b3e6" stroke-width="1" stroke-dasharray="3,3"/>
<line x1="1199" y1="117.5" x2="1834" y2="117.5" stroke="#d9b3e6" stroke-width="1" stroke-dasharray="14,5,4,5"/>
<circle cx="1196" cy="117.5" r="1.5" fill="#fff" stroke="#d9b3e6" stroke-width="0.7"/>
<line x1="4" y1="162.5" x2="1834" y2="162.5" stroke="#d0d0d0" stroke-width="1" stroke-dasharray="4,4"/>
<line x1="4" y1="292.5" x2="1196" y2="292.5" stroke="#a9c985" stroke-width="1" stroke-dasharray="9,3"/>
<line x1="7" y1="292.5" x2="1196" y2="292.5" stroke="#7fb6f2" stroke-width="1" stroke-dasharray="3,9"/>
<line x1="1196" y1="292.5" x2="1834" y2="292.5" stroke="#a9c985" stroke-width="1" stroke-dasharray="14,5,4,5"/>
<line x1="1196" y1="292.5" x2="1834" y2="292.5" stroke="#7fb6f2" stroke-width="1" stroke-dasharray="5,23" stroke-dashoffset="-4"/>
<line x1="4" y1="375.5" x2="1196" y2="375.5" stroke="#f04848" stroke-width="1" stroke-dasharray="3.5,3"/>
<line x1="1199" y1="375.5" x2="1834" y2="375.5" stroke="#f04848" stroke-width="1" stroke-dasharray="14,5,4,5"/>
<circle cx="1196" cy="375.5" r="1.5" fill="#fff" stroke="#f46a6a" stroke-width="0.7"/>
<circle cx="22.8" cy="375.5" r="1.5" fill="#fff" stroke="#f46a6a" stroke-width="0.7"/>
<circle cx="1196" cy="292.5" r="1.5" fill="#fff" stroke="#a9c985" stroke-width="0.7"/>
<line x1="638" y1="108.5" x2="1365" y2="119.5" stroke="#8088b0" stroke-width="1" />
<line x1="591" y1="244.8" x2="1262" y2="250" stroke="#8088b0" stroke-width="1" />
<line x1="457" y1="274.5" x2="1413" y2="394.7" stroke="#8088b0" stroke-width="1" />
<line x1="664" y1="69" x2="1400" y2="400" stroke="#9aa2c0" stroke-width="1" stroke-dasharray="3.5,4"/>
<line x1="500.5" y1="17.8" x2="500.5" y2="123.4" stroke="#de0000" stroke-width="1" />
<rect x="498" y="17.8" width="5" height="77.7" fill="#de0000" />
<line x1="506.5" y1="94.9" x2="506.5" y2="120.2" stroke="#de0000" stroke-width="1" />
<rect x="504" y="94.9" width="5" height="23.2" fill="#de0000" />
<line x1="512.5" y1="117" x2="512.5" y2="130.8" stroke="#de0000" stroke-width="1" />
<rect x="510" y="117" width="5" height="7.4" fill="#de0000" />
<line x1="518.5" y1="124.4" x2="518.5" y2="196.9" stroke="#de0000" stroke-width="1" />
<rect x="516" y="124.4" width="5" height="59.1" fill="#de0000" />
<line x1="524.5" y1="161.4" x2="524.5" y2="195.8" stroke="#0a60c8" stroke-width="1" />
<rect x="522" y="181" width="5" height="2.1" fill="#0a60c8" />
<line x1="530.5" y1="179.3" x2="530.5" y2="200.5" stroke="#de0000" stroke-width="1" />
<rect x="528" y="180.8" width="5" height="1.7" fill="#de0000" />
<line x1="536.5" y1="149.1" x2="536.5" y2="185.7" stroke="#0a60c8" stroke-width="1" />
<rect x="534" y="152.9" width="5" height="29.6" fill="#0a60c8" />
<line x1="542.5" y1="143" x2="542.5" y2="177.2" stroke="#de0000" stroke-width="1" />
<rect x="540" y="152.9" width="5" height="24.3" fill="#de0000" />
<line x1="549.5" y1="166.2" x2="549.5" y2="197.3" stroke="#de0000" stroke-width="1" />
<rect x="547" y="175.7" width="5" height="13.7" fill="#de0000" />
<line x1="555.5" y1="158.9" x2="555.5" y2="189.5" stroke="#0a60c8" stroke-width="1" />
<rect x="553" y="169.8" width="5" height="19.6" fill="#0a60c8" />
<line x1="561.5" y1="161" x2="561.5" y2="171.3" stroke="#0a60c8" stroke-width="1" />
<rect x="559" y="167.3" width="5" height="4" fill="#0a60c8" />
<line x1="567.5" y1="166.2" x2="567.5" y2="182.5" stroke="#de0000" stroke-width="1" />
<rect x="565" y="167.1" width="5" height="7" fill="#de0000" />
<line x1="573.5" y1="165" x2="573.5" y2="189.5" stroke="#de0000" stroke-width="1" />
<rect x="571" y="173.4" width="5" height="16.1" fill="#de0000" />
<line x1="579.5" y1="178.3" x2="579.5" y2="197.7" stroke="#0a60c8" stroke-width="1" />
<rect x="577" y="186.1" width="5" height="3.4" fill="#0a60c8" />
<line x1="585.5" y1="174.1" x2="585.5" y2="186.7" stroke="#0a60c8" stroke-width="1" />
<rect x="583" y="178.3" width="5" height="8.4" fill="#0a60c8" />
<line x1="591.5" y1="175.7" x2="591.5" y2="188.8" stroke="#de0000" stroke-width="1" />
<rect x="589" y="176.8" width="5" height="5.3" fill="#de0000" />
<line x1="597.5" y1="171.3" x2="597.5" y2="193.7" stroke="#0a60c8" stroke-width="1" />
<rect x="595" y="171.3" width="5" height="10.1" fill="#0a60c8" />
<line x1="603.5" y1="156.1" x2="603.5" y2="191" stroke="#de0000" stroke-width="1" />
<rect x="601" y="171.3" width="5" height="7" fill="#de0000" />
<line x1="609.5" y1="146.2" x2="609.5" y2="177.7" stroke="#0a60c8" stroke-width="1" />
<rect x="607" y="150.2" width="5" height="27.5" fill="#0a60c8" />
<line x1="615.5" y1="145.1" x2="615.5" y2="165.6" stroke="#de0000" stroke-width="1" />
<rect x="613" y="150.2" width="5" height="13.3" fill="#de0000" />
<line x1="621.5" y1="127.6" x2="621.5" y2="163.5" stroke="#0a60c8" stroke-width="1" />
<rect x="619" y="135" width="5" height="28.5" fill="#0a60c8" />
<line x1="627.5" y1="116" x2="627.5" y2="135.6" stroke="#0a60c8" stroke-width="1" />
<rect x="625" y="125.9" width="5" height="9.7" fill="#0a60c8" />
<line x1="633.5" y1="114.5" x2="633.5" y2="137.1" stroke="#0a60c8" stroke-width="1" />
<rect x="631" y="116" width="5" height="11.2" fill="#0a60c8" />
<line x1="639.5" y1="110.1" x2="639.5" y2="130.8" stroke="#de0000" stroke-width="1" />
<rect x="637" y="116" width="5" height="1.2" fill="#de0000" />
<line x1="645.5" y1="107.5" x2="645.5" y2="121.9" stroke="#de0000" stroke-width="1" />
<rect x="643" y="116" width="5" height="5.9" fill="#de0000" />
<line x1="651.5" y1="121.3" x2="651.5" y2="138.8" stroke="#de0000" stroke-width="1" />
<rect x="649" y="121.3" width="5" height="9.5" fill="#de0000" />
<line x1="658.5" y1="129.7" x2="658.5" y2="152.9" stroke="#de0000" stroke-width="1" />
<rect x="656" y="129.7" width="5" height="16.9" fill="#de0000" />
<line x1="664.5" y1="140.3" x2="664.5" y2="154" stroke="#0a60c8" stroke-width="1" />
<rect x="662" y="143.4" width="5" height="3.2" fill="#0a60c8" />
<line x1="670.5" y1="133.9" x2="670.5" y2="147.7" stroke="#de0000" stroke-width="1" />
<rect x="668" y="143.9" width="5" height="3.8" fill="#de0000" />
<line x1="676.5" y1="132.4" x2="676.5" y2="149.8" stroke="#0a60c8" stroke-width="1" />
<rect x="674" y="138.2" width="5" height="9.5" fill="#0a60c8" />
<line x1="682.5" y1="124.4" x2="682.5" y2="181.9" stroke="#de0000" stroke-width="1" />
<rect x="680" y="138.2" width="5" height="21.5" fill="#de0000" />
<line x1="688.5" y1="156.1" x2="688.5" y2="177.7" stroke="#de0000" stroke-width="1" />
<rect x="686" y="158.9" width="5" height="12" fill="#de0000" />
<line x1="694.5" y1="164.6" x2="694.5" y2="191.6" stroke="#de0000" stroke-width="1" />
<rect x="692" y="169.8" width="5" height="10.6" fill="#de0000" />
<line x1="700.5" y1="173" x2="700.5" y2="191" stroke="#de0000" stroke-width="1" />
<rect x="698" y="180" width="5" height="7.8" fill="#de0000" />
<line x1="706.5" y1="184.6" x2="706.5" y2="193.1" stroke="#de0000" stroke-width="1" />
<rect x="704" y="186.7" width="5" height="2.7" fill="#de0000" />
<line x1="712.5" y1="189.3" x2="712.5" y2="230.7" stroke="#de0000" stroke-width="1" />
<rect x="710" y="189.3" width="5" height="41.4" fill="#de0000" />
<line x1="718.5" y1="222.6" x2="718.5" y2="235.7" stroke="#0a60c8" stroke-width="1" />
<rect x="716" y="229" width="5" height="1.7" fill="#0a60c8" />
<line x1="724.5" y1="205.7" x2="724.5" y2="230.7" stroke="#0a60c8" stroke-width="1" />
<rect x="722" y="205.7" width="5" height="24.9" fill="#0a60c8" />
<line x1="730.5" y1="199" x2="730.5" y2="210" stroke="#0a60c8" stroke-width="1" />
<rect x="728" y="204.7" width="5" height="5.3" fill="#0a60c8" />
<line x1="736.5" y1="201.5" x2="736.5" y2="210" stroke="#de0000" stroke-width="1" />
<rect x="734" y="204.7" width="5" height="2.5" fill="#de0000" />
<line x1="742.5" y1="192" x2="742.5" y2="207.9" stroke="#0a60c8" stroke-width="1" />
<rect x="740" y="198.8" width="5" height="9.1" fill="#0a60c8" />
<line x1="748.5" y1="198.2" x2="748.5" y2="233.1" stroke="#de0000" stroke-width="1" />
<rect x="746" y="198.2" width="5" height="13.7" fill="#de0000" />
<line x1="754.5" y1="189.8" x2="754.5" y2="215.1" stroke="#0a60c8" stroke-width="1" />
<rect x="752" y="191.9" width="5" height="19" fill="#0a60c8" />
<line x1="760.5" y1="191.9" x2="760.5" y2="208.8" stroke="#de0000" stroke-width="1" />
<rect x="758" y="191.9" width="5" height="15.8" fill="#de0000" />
<line x1="767.5" y1="196.1" x2="767.5" y2="209.8" stroke="#0a60c8" stroke-width="1" />
<rect x="765" y="201.4" width="5" height="6.3" fill="#0a60c8" />
<line x1="773.5" y1="194" x2="773.5" y2="209.8" stroke="#de0000" stroke-width="1" />
<rect x="771" y="203.5" width="5" height="4.2" fill="#de0000" />
<line x1="779.5" y1="201.4" x2="779.5" y2="215.1" stroke="#0a60c8" stroke-width="1" />
<rect x="777" y="203.5" width="5" height="3.2" fill="#0a60c8" />
<line x1="785.5" y1="186.6" x2="785.5" y2="208.8" stroke="#0a60c8" stroke-width="1" />
<rect x="783" y="192.9" width="5" height="11.6" fill="#0a60c8" />
<line x1="791.5" y1="180.9" x2="791.5" y2="199.3" stroke="#0a60c8" stroke-width="1" />
<rect x="789" y="185.5" width="5" height="7.4" fill="#0a60c8" />
<line x1="797.5" y1="176" x2="797.5" y2="209.8" stroke="#de0000" stroke-width="1" />
<rect x="795" y="185.5" width="5" height="23.2" fill="#de0000" />
<line x1="803.5" y1="207.7" x2="803.5" y2="243.6" stroke="#de0000" stroke-width="1" />
<rect x="801" y="207.7" width="5" height="19" fill="#de0000" />
<line x1="809.5" y1="221.5" x2="809.5" y2="240.5" stroke="#de0000" stroke-width="1" />
<rect x="807" y="226.1" width="5" height="5.9" fill="#de0000" />
<line x1="815.5" y1="220.4" x2="815.5" y2="247.9" stroke="#0a60c8" stroke-width="1" />
<rect x="813" y="222.5" width="5" height="8.9" fill="#0a60c8" />
<line x1="821.5" y1="217.2" x2="821.5" y2="224.6" stroke="#0a60c8" stroke-width="1" />
<rect x="819" y="219.3" width="5" height="4.2" fill="#0a60c8" />
<line x1="827.5" y1="137" x2="827.5" y2="224.6" stroke="#0a60c8" stroke-width="1" />
<rect x="825" y="143.7" width="5" height="73.9" fill="#0a60c8" />
<line x1="833.5" y1="134.9" x2="833.5" y2="184.5" stroke="#de0000" stroke-width="1" />
<rect x="831" y="143.7" width="5" height="24.9" fill="#de0000" />
<line x1="839.5" y1="168" x2="839.5" y2="199.3" stroke="#de0000" stroke-width="1" />
<rect x="837" y="168" width="5" height="28.1" fill="#de0000" />
<line x1="845.5" y1="181.3" x2="845.5" y2="218.7" stroke="#de0000" stroke-width="1" />
<rect x="843" y="196.1" width="5" height="11.6" fill="#de0000" />
<line x1="851.5" y1="203.5" x2="851.5" y2="213" stroke="#0a60c8" stroke-width="1" />
<rect x="849" y="206.7" width="5" height="1.2" fill="#0a60c8" />
<line x1="857.5" y1="205" x2="857.5" y2="245.7" stroke="#de0000" stroke-width="1" />
<rect x="855" y="205" width="5" height="31.3" fill="#de0000" />
<line x1="863.5" y1="234.3" x2="863.5" y2="257.1" stroke="#0a60c8" stroke-width="1" />
<rect x="861" y="234.3" width="5" height="1.9" fill="#0a60c8" />
<line x1="869.5" y1="233.3" x2="869.5" y2="251.4" stroke="#de0000" stroke-width="1" />
<rect x="867" y="234.3" width="5" height="3.8" fill="#de0000" />
<line x1="876.5" y1="235.2" x2="876.5" y2="254.2" stroke="#de0000" stroke-width="1" />
<rect x="874" y="237.1" width="5" height="7.6" fill="#de0000" />
<line x1="882.5" y1="217.1" x2="882.5" y2="243.8" stroke="#0a60c8" stroke-width="1" />
<rect x="880" y="228.6" width="5" height="1.9" fill="#0a60c8" />
<line x1="888.5" y1="216.2" x2="888.5" y2="246.6" stroke="#0a60c8" stroke-width="1" />
<rect x="886" y="221" width="5" height="8.6" fill="#0a60c8" />
<line x1="894.5" y1="214.3" x2="894.5" y2="275.1" stroke="#de0000" stroke-width="1" />
<rect x="892" y="221" width="5" height="49.4" fill="#de0000" />
<line x1="900.5" y1="267.1" x2="900.5" y2="297.9" stroke="#de0000" stroke-width="1" />
<rect x="898" y="269.8" width="5" height="14.8" fill="#de0000" />
<line x1="906.5" y1="278" x2="906.5" y2="301.7" stroke="#de0000" stroke-width="1" />
<rect x="904" y="284.2" width="5" height="1.3" fill="#de0000" />
<line x1="912.5" y1="274.2" x2="912.5" y2="286.5" stroke="#0a60c8" stroke-width="1" />
<rect x="910" y="282.1" width="5" height="2.5" fill="#0a60c8" />
<line x1="918.5" y1="283.7" x2="918.5" y2="293.2" stroke="#de0000" stroke-width="1" />
<rect x="916" y="283.7" width="5" height="9.5" fill="#de0000" />
<line x1="924.5" y1="288.4" x2="924.5" y2="308.9" stroke="#0a60c8" stroke-width="1" />
<rect x="922" y="290.3" width="5" height="2.9" fill="#0a60c8" />
<line x1="930.5" y1="265" x2="930.5" y2="299.8" stroke="#0a60c8" stroke-width="1" />
<rect x="928" y="265" width="5" height="25.7" fill="#0a60c8" />
<line x1="936.5" y1="259.5" x2="936.5" y2="278.9" stroke="#de0000" stroke-width="1" />
<rect x="934" y="265" width="5" height="8.6" fill="#de0000" />
<line x1="942.5" y1="272.8" x2="942.5" y2="304.6" stroke="#de0000" stroke-width="1" />
<rect x="940" y="272.8" width="5" height="27.9" fill="#de0000" />
<line x1="948.5" y1="299.8" x2="948.5" y2="317.9" stroke="#de0000" stroke-width="1" />
<rect x="946" y="299.8" width="5" height="12.9" fill="#de0000" />
<line x1="954.5" y1="299.8" x2="954.5" y2="314.6" stroke="#0a60c8" stroke-width="1" />
<rect x="952" y="299.8" width="5" height="12.9" fill="#0a60c8" />
<line x1="960.5" y1="286.9" x2="960.5" y2="311.2" stroke="#0a60c8" stroke-width="1" />
<rect x="958" y="293.2" width="5" height="7.6" fill="#0a60c8" />
<line x1="966.5" y1="286.9" x2="966.5" y2="299.8" stroke="#de0000" stroke-width="1" />
<rect x="964" y="293.2" width="5" height="6.7" fill="#de0000" />
<line x1="972.5" y1="294.1" x2="972.5" y2="314.6" stroke="#de0000" stroke-width="1" />
<rect x="970" y="297.9" width="5" height="16.7" fill="#de0000" />
<line x1="978.5" y1="296" x2="978.5" y2="314.6" stroke="#0a60c8" stroke-width="1" />
<rect x="976" y="296" width="5" height="18.6" fill="#0a60c8" />
<line x1="985.5" y1="289.9" x2="985.5" y2="320.3" stroke="#de0000" stroke-width="1" />
<rect x="983" y="296" width="5" height="24.3" fill="#de0000" />
<line x1="991.5" y1="310.8" x2="991.5" y2="324.5" stroke="#0a60c8" stroke-width="1" />
<rect x="989" y="316.5" width="5" height="4.2" fill="#0a60c8" />
<line x1="997.5" y1="316" x2="997.5" y2="345.8" stroke="#de0000" stroke-width="1" />
<rect x="995" y="316" width="5" height="16.5" fill="#de0000" />
<line x1="1003.5" y1="328.3" x2="1003.5" y2="347.3" stroke="#de0000" stroke-width="1" />
<rect x="1001" y="331.7" width="5" height="11.4" fill="#de0000" />
<line x1="1009.5" y1="322" x2="1009.5" y2="343.5" stroke="#0a60c8" stroke-width="1" />
<rect x="1007" y="327.4" width="5" height="15.2" fill="#0a60c8" />
<line x1="1015.5" y1="323.2" x2="1015.5" y2="332.1" stroke="#0a60c8" stroke-width="1" />
<rect x="1013" y="323.2" width="5" height="5.1" fill="#0a60c8" />
<line x1="1021.5" y1="311.8" x2="1021.5" y2="324.1" stroke="#0a60c8" stroke-width="1" />
<rect x="1019" y="316.9" width="5" height="7.2" fill="#0a60c8" />
<line x1="1027.5" y1="313.1" x2="1027.5" y2="323.6" stroke="#0a60c8" stroke-width="1" />
<rect x="1025" y="314.1" width="5" height="3.8" fill="#0a60c8" />
<line x1="1033.5" y1="300.8" x2="1033.5" y2="324.9" stroke="#0a60c8" stroke-width="1" />
<rect x="1031" y="302.7" width="5" height="11.8" fill="#0a60c8" />
<line x1="1039.5" y1="268.1" x2="1039.5" y2="303.6" stroke="#0a60c8" stroke-width="1" />
<rect x="1037" y="268.1" width="5" height="35.5" fill="#0a60c8" />
<line x1="1045.5" y1="257.1" x2="1045.5" y2="275.5" stroke="#de0000" stroke-width="1" />
<rect x="1043" y="268.1" width="5" height="7.4" fill="#de0000" />
<line x1="1051.5" y1="251.4" x2="1051.5" y2="275.5" stroke="#0a60c8" stroke-width="1" />
<rect x="1049" y="256.5" width="5" height="19" fill="#0a60c8" />
<line x1="1057.5" y1="246.6" x2="1057.5" y2="260.9" stroke="#0a60c8" stroke-width="1" />
<rect x="1055" y="251.4" width="5" height="5.7" fill="#0a60c8" />
<line x1="1063.5" y1="248.5" x2="1063.5" y2="269.8" stroke="#de0000" stroke-width="1" />
<rect x="1061" y="251.4" width="5" height="13.3" fill="#de0000" />
<line x1="1069.5" y1="251.4" x2="1069.5" y2="268.5" stroke="#0a60c8" stroke-width="1" />
<rect x="1067" y="264.7" width="5" height="1.9" fill="#0a60c8" />
<line x1="1075.5" y1="254.2" x2="1075.5" y2="283.7" stroke="#de0000" stroke-width="1" />
<rect x="1073" y="264.7" width="5" height="5.1" fill="#de0000" />
<line x1="1081.5" y1="260.9" x2="1081.5" y2="289.9" stroke="#de0000" stroke-width="1" />
<rect x="1079" y="269" width="5" height="18.4" fill="#de0000" />
<line x1="1087.5" y1="284.6" x2="1087.5" y2="304.9" stroke="#de0000" stroke-width="1" />
<rect x="1085" y="286.9" width="5" height="9.1" fill="#de0000" />
<line x1="1093.5" y1="288.4" x2="1093.5" y2="304.9" stroke="#0a60c8" stroke-width="1" />
<rect x="1091" y="295.1" width="5" height="1.3" fill="#0a60c8" />
<line x1="1100.5" y1="282.7" x2="1100.5" y2="295.1" stroke="#0a60c8" stroke-width="1" />
<rect x="1098" y="288.4" width="5" height="6.7" fill="#0a60c8" />
<line x1="1106.5" y1="289.4" x2="1106.5" y2="300.8" stroke="#de0000" stroke-width="1" />
<rect x="1104" y="289.4" width="5" height="8.6" fill="#de0000" />
<line x1="1112.5" y1="286.9" x2="1112.5" y2="305.5" stroke="#0a60c8" stroke-width="1" />
<rect x="1110" y="286.9" width="5" height="11" fill="#0a60c8" />
<line x1="1118.5" y1="277" x2="1118.5" y2="292.2" stroke="#de0000" stroke-width="1" />
<rect x="1116" y="286.9" width="5" height="5.3" fill="#de0000" />
<line x1="1124.5" y1="263.3" x2="1124.5" y2="298.9" stroke="#0a60c8" stroke-width="1" />
<rect x="1122" y="270.9" width="5" height="21.3" fill="#0a60c8" />
<line x1="1130.5" y1="269" x2="1130.5" y2="299.8" stroke="#de0000" stroke-width="1" />
<rect x="1128" y="270.9" width="5" height="22.2" fill="#de0000" />
<line x1="1136.5" y1="273.2" x2="1136.5" y2="293.2" stroke="#0a60c8" stroke-width="1" />
<rect x="1134" y="281.2" width="5" height="12" fill="#0a60c8" />
<line x1="1142.5" y1="267.9" x2="1142.5" y2="282.7" stroke="#de0000" stroke-width="1" />
<rect x="1140" y="281.2" width="5" height="1.5" fill="#de0000" />
<line x1="1148.5" y1="281.8" x2="1148.5" y2="315" stroke="#de0000" stroke-width="1" />
<rect x="1146" y="281.8" width="5" height="33.3" fill="#de0000" />
<line x1="1154.5" y1="315" x2="1154.5" y2="359.7" stroke="#de0000" stroke-width="1" />
<rect x="1152" y="315" width="5" height="39" fill="#de0000" />
<line x1="1160.5" y1="335" x2="1160.5" y2="360.6" stroke="#0a60c8" stroke-width="1" />
<rect x="1158" y="340.1" width="5" height="13.9" fill="#0a60c8" />
<line x1="1166.5" y1="315" x2="1166.5" y2="340.7" stroke="#0a60c8" stroke-width="1" />
<rect x="1164" y="331.2" width="5" height="9.5" fill="#0a60c8" />
<line x1="1172.5" y1="322.6" x2="1172.5" y2="335.9" stroke="#0a60c8" stroke-width="1" />
<rect x="1170" y="329.8" width="5" height="1.9" fill="#0a60c8" />
<line x1="1178.5" y1="329.8" x2="1178.5" y2="358.7" stroke="#de0000" stroke-width="1" />
<rect x="1176" y="329.8" width="5" height="8" fill="#de0000" />
<line x1="1184.5" y1="333.1" x2="1184.5" y2="368.6" stroke="#de0000" stroke-width="1" />
<rect x="1182" y="337.4" width="5" height="14.1" fill="#de0000" />
<line x1="1190.5" y1="319.8" x2="1190.5" y2="353" stroke="#0a60c8" stroke-width="1" />
<rect x="1188" y="338.8" width="5" height="12.7" fill="#0a60c8" />
<line x1="1196.5" y1="295.1" x2="1196.5" y2="339.7" stroke="#0a60c8" stroke-width="1" />
<rect x="1194" y="297" width="5" height="38" fill="#0a60c8" />
<line x1="1202.5" y1="285.9" x2="1202.5" y2="297.5" stroke="#0a60c8" stroke-width="1" />
<rect x="1200" y="289.4" width="5" height="8.2" fill="#0a60c8" />
<polyline points="603.7,64.2 604.8,69.5 609,91.7 613.2,108.6 619.5,121.3 626.9,128.6 634.3,125.5 640.2,118.1 646.4,112.8 653.3,109.6 663.9,108.2 676.4,106.9 688.4,106.5 700.4,105.8 706.6,104.4 712.7,97 718.6,92.1 724.7,91.3 730.6,90.6 736.8,90.2 742.7,92.7 749.5,100 761.1,112.7 771.7,129.6 782.2,142.2 791.7,152.8 797.5,165.5 803.6,171.8 812.9,178.2 821.5,182.8 824.5,176 827.7,168.6 831.9,164.4 839.3,162.9 851.9,162.9 866.7,161.7 887.9,162.3 894.2,158.1 900.7,155.6 909,156 915.3,157 930.7,156.6 942.8,158.1 945.9,169.7 951.2,182.4 957.6,192.9 967.1,205.6 973.2,214.1 985.4,224.6 997.7,235.2 1004,243.6 1006.6,252.1 1009.3,257.4 1014.6,260.5 1025.1,265.8 1033.6,269.6 1040,264.7 1051.4,258 1063.4,249.5 1069.5,245.7 1075.5,243.8 1087.5,243.2 1100.4,241.9 1112.4,241.3 1118.3,243.2 1130.5,247.6 1138.8,250.4 1144.5,251.4 1149.3,249.5 1154.4,242.8 1160.5,239.4 1166.6,239 1172.4,242.8 1178.5,248.5 1184.4,253.3 1190.5,257.1 1196.4,259.5 1202.5,259.5" fill="none" stroke="#e04a10" stroke-width="1" />
<polyline points="491.7,64.2 493.9,69.5 501.3,87.5 509.7,114.9 519.2,144.5 531.2,186.7 539.3,207.9 549.8,229 558.3,238.5 568.8,244.2 573.5,242.1 579.4,244.8 590,249.5 596.3,248 602.6,242.7 609,229 615.3,216.3 621.7,208.9 626.9,206.2 634.3,207.9 642.8,209.5 651.2,208.9 659.7,206.8 668.1,202.6 676.6,199.8 685,199 694.5,197.7 701.9,197.7 706.6,199.4 712.7,214.2 718.6,222.6 724.7,229 730.6,234.3 736.8,238.5 740,241.5 748.4,245.3 761.1,245.3 773.4,243.2 785.4,239.8 794.9,234.1 803.6,233.1 815.6,235.2 821.5,237.3 827.7,245.3 833.8,243.6 839.7,240.5 851.9,239.8 857.7,243.6 860,246.6 867.6,251.4 879,257.1 888.5,259 894.6,271.3 900.5,282.7 906.6,292.2 912.4,299.8 918.5,307.4 924.6,313.1 930.5,316 936.6,319.8 942.5,327.7 951.2,327.4 960.5,328.3 972.5,330.2 981.6,334 991.5,340.7 997.4,344.5 1003.5,345.4 1015.4,343.5 1027.4,345 1033.5,344.5 1034.3,346.9 1040,346.4 1051.4,349.2 1063.4,352.1 1078,351.7 1089.4,351.1 1100.4,350.2 1106.3,348.3 1112.4,345.4 1118.3,339.7 1124.4,332.1 1130.5,324.5 1136.5,317.9 1142.6,314.4 1148.5,314.4 1152.1,320.7 1155.9,332.1 1161.6,339.7 1166.6,344.5 1172.4,348.3 1178.5,351.1 1184.4,356.8 1190.5,360" fill="none" stroke="#e04a10" stroke-width="1" />
<polyline points="1000,65 1021,69.5 1069.7,80 1105.6,89.1 1147.8,99 1179.5,108.6 1202.7,115.3" fill="none" stroke="#ff8000" stroke-width="2.4" />
<polyline points="850,63.2 926.9,100 940.7,107.4 955,114.8 967.1,121.1 979.3,127.5 991.4,134.9 1000,139.2 1021,151.9 1042,162.4 1069.7,173 1095,183.5 1126.7,197.3 1147.8,205.3 1169,216.3 1185.8,224.3 1202.7,229" fill="none" stroke="#008000" stroke-width="2.4" />
<polyline points="613.2,64.2 625.9,69.5 640.7,75.8 652.3,81.1 664.3,88.5 676.4,97 688.4,104.4 700.4,111.7 712.7,120.2 724.7,128.6 736.8,137.1 740,140.1 750.6,147.5 761.1,154.5 771.7,159.1 785.4,167.6 797.5,173.9 809.5,178.2 821.5,179.2 827.7,179.2 839.7,179.6 851.7,180.3 864,183.4 876.2,185.1 888.5,187 900.7,190.8 912.8,196.1 924.8,202.4 936.6,208.8 948.9,215.7 961.1,221.5 974,228.6 993,238.1 1008.2,245.7 1021.5,250.4 1034.8,254.2 1040,255.7 1057.5,259 1075.5,264.7 1094.5,269.8 1112.4,273.2 1124.4,276.1 1136.5,280.4 1148.5,284.6 1160.5,289.4 1172.4,293.2 1184.4,297 1193.9,299.8 1202.5,299.8" fill="none" stroke="#0000ff" stroke-width="2.4" />
<polyline points="538.2,64.2 541,69.5 549.8,85.3 561.5,101.2 573.1,121.3 585.7,136 597.4,148.7 609.4,160.3 618.5,166.7 625.9,167.7 633.7,167.7 640.2,164.6 646.4,161.4 652.3,158.9 658.4,157.2 664.3,155.7 670.4,154 676.4,152.9 682.5,152.3 688.4,151.9 694.5,151.9 706.6,151.9 712.7,154.6 718.6,157.6 724.7,159.3 730.6,162.4 736.8,164.6 740,166.5 750.6,172.9 761.1,179.8 773.4,187.7 785.4,192.9 797.5,199.3 809.5,205.6 821.5,208.8 827.7,206.7 833.8,203.5 845.6,202.4 857.7,203.5 870.3,206.7 882.6,209.4 892.1,213 900.7,220.4 900.9,220 909.4,225.7 920.8,233.3 932.2,237.1 939.8,240.9 945.5,248.5 954.4,259 966.4,269.4 974,274.2 985.4,279.9 997.4,289.4 1006.3,297.9 1015.4,302.7 1027.4,305.5 1039.6,305.5 1040,305.1 1057.5,303.6 1069.5,299.8 1081.4,297 1094.5,296 1106.3,295.1 1118.3,289.4 1130.5,285.6 1142.6,282.3 1148.5,282.3 1154.4,286.5 1166.6,291.3 1178.5,299.8 1190.5,307.4 1202.5,308" fill="none" stroke="#ff0000" stroke-width="2.4" />
<polyline points="503.4,64.2 505.5,69.5 511.8,85.3 518.6,112.8 524.5,140.3 531.2,157.2 537.4,165.6 543.5,175.7 549.4,175.7 555.3,174.1 561.5,171.9 567.4,175.1 573.5,176.8 579.4,176.8 585.3,178.3 591.4,180.8 597.4,181 603.5,179.3 609.4,173 615.5,168.8 621.4,160.3 627.6,148.7 633.7,138.2 640.2,128.6 646.4,122.7 652.3,122.3 658.4,126.5 664.3,132.9 670.4,138.6 676.4,141.3 682.5,148.7 688.4,154 694.5,161.4 700.4,169.8 706.6,180.4 712.7,193.1 718.6,203.6 724.7,210 730.6,214.2 736.8,216.3 740,213 749.1,206.7 755.2,203.5 761.3,202.9 767.5,203.5 773.4,203.9 779.5,203.5 785.4,202.9 791.5,198.9 797.5,200.3 803.6,205.6 809.5,210.9 815.6,216.2 821.5,221.5 827.7,209.8 833.8,198.2 839.7,190.8 845.6,185.5 850.9,184.5 854.1,190.8 857.7,203.5 864,215.1 866.7,220 876.3,231.4 882.4,236.2 888.5,233.7 894.6,240.9 900.5,250.4 906.6,259 912.4,268.5 917,280.8 923.7,287.1 930.5,283.7 936.6,281.8 942.5,285.6 948.6,289.4 954.4,290.7 960.5,296 966.4,299.8 972.5,302.7 978.6,300.8 985.4,303.6 991.5,310.3 997.4,316.9 1003.5,322.6 1008.2,327.9 1015.4,328.3 1021.5,329.3 1027.4,326.4 1033.5,318.8 1039.6,305.5 1045.3,294.1 1051.4,280.8 1057.5,270.4 1063.4,263.7 1069.5,262.8 1075.5,262.8 1081.4,269.4 1087.5,277 1094.5,282.7 1100.4,287.5 1106.3,292.6 1112.4,293.2 1118.3,292.2 1124.4,288.4 1130.5,286.5 1136.5,284.6 1140.7,284.2 1144.5,285.6 1148.5,290.3 1154.4,305.5 1160.5,315 1166.6,324.5 1172.4,333.1 1176.8,337.8 1184.4,338.2 1190.5,337.8 1196.4,331.2 1202.5,322.6" fill="none" stroke="#000" stroke-width="2" stroke-linejoin="round"/>
<line x1="827.7" y1="137" x2="1003.5" y2="347.3" stroke="#1020ff" stroke-width="1" stroke-dasharray="4,5"/>
<line x1="1009.5" y1="343.5" x2="1057.6" y2="246.6" stroke="#1020ff" stroke-width="1" stroke-dasharray="4,5"/>
<line x1="1057.5" y1="246.6" x2="1184.4" y2="368.6" stroke="#1020ff" stroke-width="1" stroke-dasharray="4,5"/>
<line x1="1208" y1="357.8" x2="1340.7" y2="147.6" stroke="#1020ff" stroke-width="1" stroke-dasharray="2,4"/>
<path d="M1196.3 345 L1208.2 357.7 L1202 357.7 L1202 368.7 L1191 368.7 L1191 357.7 L1185 357.7 Z" fill="url(#ga)"/>
</g>
<rect x="23" y="266.5" width="10" height="17" fill="#3a7d3a" />
<line x1="26.5" y1="268" x2="26.5" y2="282" stroke="#fff" stroke-width="1" stroke-dasharray="2,2"/>
<rect x="33" y="266.5" width="131.5" height="17" fill="#d7e6c4" />
<text x="39" y="279" font-size="11" fill="#8fae7c" textLength="122" lengthAdjust="spacingAndGlyphs" >Long(01/16 21:51, 2)</text>
<line x1="23.5" y1="283.5" x2="23.5" y2="292" stroke="#cfe0ba" stroke-width="1" />
<rect x="23" y="349.3" width="10" height="17.5" fill="#3a7d3a" />
<line x1="26.5" y1="351" x2="26.5" y2="365" stroke="#fff" stroke-width="1" stroke-dasharray="2,2"/>
<rect x="33" y="349.3" width="35" height="17.5" fill="#f27474" />
<text x="38.5" y="362" font-size="11" fill="#d63c3c" textLength="25" lengthAdjust="spacingAndGlyphs" >Stop</text>
<line x1="23.5" y1="366.8" x2="23.5" y2="374" stroke="#f04848" stroke-width="1" />
<rect x="827" y="119" width="24" height="16.5" fill="url(#gl)"/>
<text x="839" y="132.9" font-size="16" fill="#000" textLength="15" lengthAdjust="spacingAndGlyphs" text-anchor="middle" font-weight="bold" font-family='DejaVu Sans Condensed, DejaVu Sans, sans-serif' >iv</text>
<rect x="700" y="254.2" width="22" height="17.8" fill="url(#gl)"/>
<text x="711" y="268.8" font-size="16" fill="#000" textLength="12" lengthAdjust="spacingAndGlyphs" text-anchor="middle" font-weight="bold" font-family='DejaVu Sans Condensed, DejaVu Sans, sans-serif' >iii</text>
<rect x="1051" y="201.5" width="21" height="17.5" fill="url(#gl)"/>
<text x="1061.5" y="215.9" font-size="16" fill="#000" textLength="10" lengthAdjust="spacingAndGlyphs" text-anchor="middle" font-weight="bold" font-family='DejaVu Sans Condensed, DejaVu Sans, sans-serif' >a</text>
<rect x="997.1" y="349.2" width="19.7" height="17.5" fill="url(#gl)"/>
<text x="1007" y="363.6" font-size="16" fill="#000" textLength="10" lengthAdjust="spacingAndGlyphs" text-anchor="middle" font-weight="bold" font-family='DejaVu Sans Condensed, DejaVu Sans, sans-serif' >v</text>
<rect x="978.9" y="388.1" width="32" height="17.9" fill="url(#ol)"/>
<text x="994.9" y="402.8" font-size="16" fill="#000" textLength="20" lengthAdjust="spacingAndGlyphs" text-anchor="middle" font-weight="bold" font-family='DejaVu Sans Condensed, DejaVu Sans, sans-serif' >(i)</text>
<rect x="1172.1" y="401.3" width="20.9" height="17.6" fill="url(#gl)"/>
<text x="1182.5" y="415.8" font-size="16" fill="#000" textLength="10" lengthAdjust="spacingAndGlyphs" text-anchor="middle" font-weight="bold" font-family='DejaVu Sans Condensed, DejaVu Sans, sans-serif' >b</text>
<rect x="1330" y="122.7" width="19" height="16.9" fill="url(#gl)"/>
<text x="1339.5" y="136.8" font-size="16" fill="#000" textLength="9" lengthAdjust="spacingAndGlyphs" text-anchor="middle" font-weight="bold" font-family='DejaVu Sans Condensed, DejaVu Sans, sans-serif' >c</text>
<rect x="1348" y="83.2" width="36" height="17.3" fill="url(#ol)"/>
<text x="1366" y="97.5" font-size="16" fill="#000" textLength="25" lengthAdjust="spacingAndGlyphs" text-anchor="middle" font-weight="bold" font-family='DejaVu Sans Condensed, DejaVu Sans, sans-serif' >(ii)</text>
<rect x="1311.1" y="242" width="146.8" height="18" fill="url(#gl)"/>
<text x="1384.5" y="256.7" font-size="16" fill="#000" textLength="135.7" lengthAdjust="spacingAndGlyphs" text-anchor="middle" font-weight="bold" font-family='DejaVu Sans Condensed, DejaVu Sans, sans-serif' >Dragon Pattern</text>
</g>
<g id="botaxis">
<line x1="4.5" y1="492.5" x2="1850" y2="492.5" stroke="#333" stroke-width="1" />
<line x1="4.5" y1="479" x2="4.5" y2="492.3" stroke="#333" stroke-width="1" />
<line x1="9.5" y1="488.3" x2="9.5" y2="492.3" stroke="#333" stroke-width="1" />
<line x1="23.5" y1="486.3" x2="23.5" y2="492.3" stroke="#333" stroke-width="1" />
<line x1="37.5" y1="488.3" x2="37.5" y2="492.3" stroke="#333" stroke-width="1" />
<line x1="52.5" y1="479.3" x2="52.5" y2="492.3" stroke="#333" stroke-width="1" />
<line x1="66.5" y1="488.3" x2="66.5" y2="492.3" stroke="#333" stroke-width="1" />
<line x1="80.5" y1="486.3" x2="80.5" y2="492.3" stroke="#333" stroke-width="1" />
<line x1="95.5" y1="488.3" x2="95.5" y2="492.3" stroke="#333" stroke-width="1" />
<line x1="109.5" y1="486.3" x2="109.5" y2="492.3" stroke="#333" stroke-width="1" />
<line x1="124.5" y1="488.3" x2="124.5" y2="492.3" stroke="#333" stroke-width="1" />
<line x1="138.5" y1="486.3" x2="138.5" y2="492.3" stroke="#333" stroke-width="1" />
<line x1="152.5" y1="488.3" x2="152.5" y2="492.3" stroke="#333" stroke-width="1" />
<line x1="167.5" y1="479.3" x2="167.5" y2="492.3" stroke="#333" stroke-width="1" />
<line x1="181.5" y1="488.3" x2="181.5" y2="492.3" stroke="#333" stroke-width="1" />
<line x1="195.5" y1="486.3" x2="195.5" y2="492.3" stroke="#333" stroke-width="1" />
<line x1="210.5" y1="488.3" x2="210.5" y2="492.3" stroke="#333" stroke-width="1" />
<line x1="224.5" y1="486.3" x2="224.5" y2="492.3" stroke="#333" stroke-width="1" />
<line x1="239.5" y1="488.3" x2="239.5" y2="492.3" stroke="#333" stroke-width="1" />
<line x1="253.5" y1="486.3" x2="253.5" y2="492.3" stroke="#333" stroke-width="1" />
<line x1="267.5" y1="488.3" x2="267.5" y2="492.3" stroke="#333" stroke-width="1" />
<line x1="282.5" y1="479.3" x2="282.5" y2="492.3" stroke="#333" stroke-width="1" />
<line x1="296.5" y1="488.3" x2="296.5" y2="492.3" stroke="#333" stroke-width="1" />
<line x1="310.5" y1="486.3" x2="310.5" y2="492.3" stroke="#333" stroke-width="1" />
<line x1="325.5" y1="488.3" x2="325.5" y2="492.3" stroke="#333" stroke-width="1" />
<line x1="339.5" y1="486.3" x2="339.5" y2="492.3" stroke="#333" stroke-width="1" />
<line x1="354.5" y1="488.3" x2="354.5" y2="492.3" stroke="#333" stroke-width="1" />
<line x1="368.5" y1="486.3" x2="368.5" y2="492.3" stroke="#333" stroke-width="1" />
<line x1="382.5" y1="488.3" x2="382.5" y2="492.3" stroke="#333" stroke-width="1" />
<line x1="397.5" y1="479.3" x2="397.5" y2="492.3" stroke="#333" stroke-width="1" />
<line x1="411.5" y1="488.3" x2="411.5" y2="492.3" stroke="#333" stroke-width="1" />
<line x1="425.5" y1="486.3" x2="425.5" y2="492.3" stroke="#333" stroke-width="1" />
<line x1="440.5" y1="488.3" x2="440.5" y2="492.3" stroke="#333" stroke-width="1" />
<line x1="454.5" y1="486.3" x2="454.5" y2="492.3" stroke="#333" stroke-width="1" />
<line x1="469.5" y1="488.3" x2="469.5" y2="492.3" stroke="#333" stroke-width="1" />
<line x1="483.5" y1="486.3" x2="483.5" y2="492.3" stroke="#333" stroke-width="1" />
<line x1="497.5" y1="488.3" x2="497.5" y2="492.3" stroke="#333" stroke-width="1" />
<line x1="512.5" y1="479.3" x2="512.5" y2="492.3" stroke="#333" stroke-width="1" />
<line x1="526.5" y1="488.3" x2="526.5" y2="492.3" stroke="#333" stroke-width="1" />
<line x1="540.5" y1="486.3" x2="540.5" y2="492.3" stroke="#333" stroke-width="1" />
<line x1="555.5" y1="488.3" x2="555.5" y2="492.3" stroke="#333" stroke-width="1" />
<line x1="569.5" y1="486.3" x2="569.5" y2="492.3" stroke="#333" stroke-width="1" />
<line x1="584.5" y1="488.3" x2="584.5" y2="492.3" stroke="#333" stroke-width="1" />
<line x1="598.5" y1="486.3" x2="598.5" y2="492.3" stroke="#333" stroke-width="1" />
<line x1="612.5" y1="488.3" x2="612.5" y2="492.3" stroke="#333" stroke-width="1" />
<line x1="627.5" y1="479.3" x2="627.5" y2="492.3" stroke="#333" stroke-width="1" />
<line x1="641.5" y1="488.3" x2="641.5" y2="492.3" stroke="#333" stroke-width="1" />
<line x1="655.5" y1="486.3" x2="655.5" y2="492.3" stroke="#333" stroke-width="1" />
<line x1="670.5" y1="488.3" x2="670.5" y2="492.3" stroke="#333" stroke-width="1" />
<line x1="684.5" y1="486.3" x2="684.5" y2="492.3" stroke="#333" stroke-width="1" />
<line x1="699.5" y1="488.3" x2="699.5" y2="492.3" stroke="#333" stroke-width="1" />
<line x1="713.5" y1="486.3" x2="713.5" y2="492.3" stroke="#333" stroke-width="1" />
<line x1="727.5" y1="488.3" x2="727.5" y2="492.3" stroke="#333" stroke-width="1" />
<line x1="742.5" y1="479.3" x2="742.5" y2="492.3" stroke="#333" stroke-width="1" />
<line x1="756.5" y1="488.3" x2="756.5" y2="492.3" stroke="#333" stroke-width="1" />
<line x1="770.5" y1="486.3" x2="770.5" y2="492.3" stroke="#333" stroke-width="1" />
<line x1="785.5" y1="488.3" x2="785.5" y2="492.3" stroke="#333" stroke-width="1" />
<line x1="799.5" y1="486.3" x2="799.5" y2="492.3" stroke="#333" stroke-width="1" />
<line x1="814.5" y1="488.3" x2="814.5" y2="492.3" stroke="#333" stroke-width="1" />
<line x1="828.5" y1="486.3" x2="828.5" y2="492.3" stroke="#333" stroke-width="1" />
<line x1="842.5" y1="488.3" x2="842.5" y2="492.3" stroke="#333" stroke-width="1" />
<line x1="857.5" y1="479.3" x2="857.5" y2="492.3" stroke="#333" stroke-width="1" />
<line x1="871.5" y1="488.3" x2="871.5" y2="492.3" stroke="#333" stroke-width="1" />
<line x1="885.5" y1="486.3" x2="885.5" y2="492.3" stroke="#333" stroke-width="1" />
<line x1="900.5" y1="488.3" x2="900.5" y2="492.3" stroke="#333" stroke-width="1" />
<line x1="914.5" y1="486.3" x2="914.5" y2="492.3" stroke="#333" stroke-width="1" />
<line x1="929.5" y1="488.3" x2="929.5" y2="492.3" stroke="#333" stroke-width="1" />
<line x1="943.5" y1="486.3" x2="943.5" y2="492.3" stroke="#333" stroke-width="1" />
<line x1="957.5" y1="488.3" x2="957.5" y2="492.3" stroke="#333" stroke-width="1" />
<line x1="972.5" y1="479.3" x2="972.5" y2="492.3" stroke="#333" stroke-width="1" />
<line x1="986.5" y1="488.3" x2="986.5" y2="492.3" stroke="#333" stroke-width="1" />
<line x1="1000.5" y1="486.3" x2="1000.5" y2="492.3" stroke="#333" stroke-width="1" />
<line x1="1015.5" y1="488.3" x2="1015.5" y2="492.3" stroke="#333" stroke-width="1" />
<line x1="1029.5" y1="486.3" x2="1029.5" y2="492.3" stroke="#333" stroke-width="1" />
<line x1="1044.5" y1="488.3" x2="1044.5" y2="492.3" stroke="#333" stroke-width="1" />
<line x1="1058.5" y1="486.3" x2="1058.5" y2="492.3" stroke="#333" stroke-width="1" />
<line x1="1072.5" y1="488.3" x2="1072.5" y2="492.3" stroke="#333" stroke-width="1" />
<line x1="1087.5" y1="479.3" x2="1087.5" y2="492.3" stroke="#333" stroke-width="1" />
<line x1="1101.5" y1="488.3" x2="1101.5" y2="492.3" stroke="#333" stroke-width="1" />
<line x1="1115.5" y1="486.3" x2="1115.5" y2="492.3" stroke="#333" stroke-width="1" />
<line x1="1130.5" y1="488.3" x2="1130.5" y2="492.3" stroke="#333" stroke-width="1" />
<line x1="1144.5" y1="486.3" x2="1144.5" y2="492.3" stroke="#333" stroke-width="1" />
<line x1="1159.5" y1="488.3" x2="1159.5" y2="492.3" stroke="#333" stroke-width="1" />
<line x1="1173.5" y1="486.3" x2="1173.5" y2="492.3" stroke="#333" stroke-width="1" />
<line x1="1187.5" y1="488.3" x2="1187.5" y2="492.3" stroke="#333" stroke-width="1" />
<line x1="1202.5" y1="479.3" x2="1202.5" y2="492.3" stroke="#333" stroke-width="1" />
<line x1="1216.5" y1="488.3" x2="1216.5" y2="492.3" stroke="#333" stroke-width="1" />
<line x1="1230.5" y1="486.3" x2="1230.5" y2="492.3" stroke="#333" stroke-width="1" />
<line x1="1245.5" y1="488.3" x2="1245.5" y2="492.3" stroke="#333" stroke-width="1" />
<line x1="1259.5" y1="486.3" x2="1259.5" y2="492.3" stroke="#333" stroke-width="1" />
<line x1="1274.5" y1="488.3" x2="1274.5" y2="492.3" stroke="#333" stroke-width="1" />
<line x1="1288.5" y1="486.3" x2="1288.5" y2="492.3" stroke="#333" stroke-width="1" />
<line x1="1302.5" y1="488.3" x2="1302.5" y2="492.3" stroke="#333" stroke-width="1" />
<line x1="1317.5" y1="479.3" x2="1317.5" y2="492.3" stroke="#333" stroke-width="1" />
<line x1="1331.5" y1="488.3" x2="1331.5" y2="492.3" stroke="#333" stroke-width="1" />
<line x1="1345.5" y1="486.3" x2="1345.5" y2="492.3" stroke="#333" stroke-width="1" />
<line x1="1360.5" y1="488.3" x2="1360.5" y2="492.3" stroke="#333" stroke-width="1" />
<line x1="1374.5" y1="486.3" x2="1374.5" y2="492.3" stroke="#333" stroke-width="1" />
<line x1="1389.5" y1="488.3" x2="1389.5" y2="492.3" stroke="#333" stroke-width="1" />
<line x1="1403.5" y1="486.3" x2="1403.5" y2="492.3" stroke="#333" stroke-width="1" />
<line x1="1417.5" y1="488.3" x2="1417.5" y2="492.3" stroke="#333" stroke-width="1" />
<line x1="1432.5" y1="479.3" x2="1432.5" y2="492.3" stroke="#333" stroke-width="1" />
<line x1="1446.5" y1="488.3" x2="1446.5" y2="492.3" stroke="#333" stroke-width="1" />
<line x1="1460.5" y1="486.3" x2="1460.5" y2="492.3" stroke="#333" stroke-width="1" />
<line x1="1475.5" y1="488.3" x2="1475.5" y2="492.3" stroke="#333" stroke-width="1" />
<line x1="1489.5" y1="486.3" x2="1489.5" y2="492.3" stroke="#333" stroke-width="1" />
<line x1="1504.5" y1="488.3" x2="1504.5" y2="492.3" stroke="#333" stroke-width="1" />
<line x1="1518.5" y1="486.3" x2="1518.5" y2="492.3" stroke="#333" stroke-width="1" />
<line x1="1532.5" y1="488.3" x2="1532.5" y2="492.3" stroke="#333" stroke-width="1" />
<line x1="1547.5" y1="479.3" x2="1547.5" y2="492.3" stroke="#333" stroke-width="1" />
<line x1="1561.5" y1="488.3" x2="1561.5" y2="492.3" stroke="#333" stroke-width="1" />
<line x1="1575.5" y1="486.3" x2="1575.5" y2="492.3" stroke="#333" stroke-width="1" />
<line x1="1590.5" y1="488.3" x2="1590.5" y2="492.3" stroke="#333" stroke-width="1" />
<line x1="1604.5" y1="486.3" x2="1604.5" y2="492.3" stroke="#333" stroke-width="1" />
<line x1="1619.5" y1="488.3" x2="1619.5" y2="492.3" stroke="#333" stroke-width="1" />
<line x1="1633.5" y1="486.3" x2="1633.5" y2="492.3" stroke="#333" stroke-width="1" />
<line x1="1647.5" y1="488.3" x2="1647.5" y2="492.3" stroke="#333" stroke-width="1" />
<line x1="1662.5" y1="479.3" x2="1662.5" y2="492.3" stroke="#333" stroke-width="1" />
<line x1="1676.5" y1="488.3" x2="1676.5" y2="492.3" stroke="#333" stroke-width="1" />
<line x1="1690.5" y1="486.3" x2="1690.5" y2="492.3" stroke="#333" stroke-width="1" />
<line x1="1705.5" y1="488.3" x2="1705.5" y2="492.3" stroke="#333" stroke-width="1" />
<line x1="1719.5" y1="486.3" x2="1719.5" y2="492.3" stroke="#333" stroke-width="1" />
<line x1="1734.5" y1="488.3" x2="1734.5" y2="492.3" stroke="#333" stroke-width="1" />
<line x1="1748.5" y1="486.3" x2="1748.5" y2="492.3" stroke="#333" stroke-width="1" />
<line x1="1762.5" y1="488.3" x2="1762.5" y2="492.3" stroke="#333" stroke-width="1" />
<line x1="1777.5" y1="479.3" x2="1777.5" y2="492.3" stroke="#333" stroke-width="1" />
<line x1="1791.5" y1="488.3" x2="1791.5" y2="492.3" stroke="#333" stroke-width="1" />
<line x1="1805.5" y1="486.3" x2="1805.5" y2="492.3" stroke="#333" stroke-width="1" />
<line x1="1820.5" y1="488.3" x2="1820.5" y2="492.3" stroke="#333" stroke-width="1" />
<line x1="1834.5" y1="486.3" x2="1834.5" y2="492.3" stroke="#333" stroke-width="1" />
<rect x="4" y="497" width="105" height="16" fill="#ff9a00" />
<text x="4.6" y="508.8" font-size="11" fill="#000" textLength="102.5" lengthAdjust="spacingAndGlyphs" >01/04/2018 19:00</text>
<text x="166" y="510" font-size="11" fill="#2b2b5e" textLength="70" lengthAdjust="spacingAndGlyphs" text-anchor="middle" >01/07 19:00</text>
<text x="281" y="510" font-size="11" fill="#2b2b5e" textLength="70" lengthAdjust="spacingAndGlyphs" text-anchor="middle" >01/08 14:00</text>
<text x="396" y="510" font-size="11" fill="#2b2b5e" textLength="70" lengthAdjust="spacingAndGlyphs" text-anchor="middle" >01/09 09:00</text>
<text x="511" y="510" font-size="11" fill="#2b2b5e" textLength="70" lengthAdjust="spacingAndGlyphs" text-anchor="middle" >01/10 04:00</text>
<text x="626" y="510" font-size="11" fill="#2b2b5e" textLength="33" lengthAdjust="spacingAndGlyphs" text-anchor="middle" >23:00</text>
<text x="741" y="510" font-size="11" fill="#2b2b5e" textLength="70" lengthAdjust="spacingAndGlyphs" text-anchor="middle" >01/11 18:00</text>
<text x="856" y="510" font-size="11" fill="#2b2b5e" textLength="70" lengthAdjust="spacingAndGlyphs" text-anchor="middle" >01/12 13:00</text>
<text x="971" y="510" font-size="11" fill="#2b2b5e" textLength="70" lengthAdjust="spacingAndGlyphs" text-anchor="middle" >01/15 08:00</text>
<text x="1086" y="510" font-size="11" fill="#2b2b5e" textLength="70" lengthAdjust="spacingAndGlyphs" text-anchor="middle" >01/16 03:00</text>
<text x="1201" y="510" font-size="11" fill="#2b2b5e" textLength="33" lengthAdjust="spacingAndGlyphs" text-anchor="middle" >22:00</text>
<text x="1316" y="510" font-size="11" fill="#2b2b5e" textLength="70" lengthAdjust="spacingAndGlyphs" text-anchor="middle" >01/17 17:00</text>
<text x="1431" y="510" font-size="11" fill="#2b2b5e" textLength="70" lengthAdjust="spacingAndGlyphs" text-anchor="middle" >01/18 12:00</text>
<text x="1546" y="510" font-size="11" fill="#2b2b5e" textLength="70" lengthAdjust="spacingAndGlyphs" text-anchor="middle" >01/19 07:00</text>
<text x="1661" y="510" font-size="11" fill="#2b2b5e" textLength="70" lengthAdjust="spacingAndGlyphs" text-anchor="middle" >01/20 02:00</text>
<text x="1776" y="510" font-size="11" fill="#2b2b5e" textLength="33" lengthAdjust="spacingAndGlyphs" text-anchor="middle" >21:00</text>
</g>
<rect x="4" y="518.2" width="1903" height="3.8" fill="#c3cddd" />
<g id="macd">
<rect x="4" y="524.5" width="1832" height="1.6" fill="#dde4ee" />
<rect x="4" y="702.4" width="1832" height="1.6" fill="#dde4ee" />
<rect x="1834" y="524.5" width="1.8" height="179.5" fill="#c5cfdf" />
<rect x="4" y="705" width="1903" height="3.6" fill="#c3cddd" />
<line x1="1849.5" y1="527" x2="1849.5" y2="702" stroke="#333" stroke-width="1" />
<line x1="1842" y1="692.5" x2="1849.5" y2="692.5" stroke="#333" stroke-width="1" />
<line x1="1845" y1="683.5" x2="1849.5" y2="683.5" stroke="#333" stroke-width="1" />
<line x1="1845" y1="674.5" x2="1849.5" y2="674.5" stroke="#333" stroke-width="1" />
<line x1="1845" y1="665.5" x2="1849.5" y2="665.5" stroke="#333" stroke-width="1" />
<line x1="1845" y1="656.5" x2="1849.5" y2="656.5" stroke="#333" stroke-width="1" />
<line x1="1835" y1="647.5" x2="1849.5" y2="647.5" stroke="#333" stroke-width="1" />
<line x1="1845" y1="638.5" x2="1849.5" y2="638.5" stroke="#333" stroke-width="1" />
<line x1="1845" y1="629.5" x2="1849.5" y2="629.5" stroke="#333" stroke-width="1" />
<line x1="1845" y1="620.5" x2="1849.5" y2="620.5" stroke="#333" stroke-width="1" />
<line x1="1845" y1="611.5" x2="1849.5" y2="611.5" stroke="#333" stroke-width="1" />
<line x1="1842" y1="602.5" x2="1849.5" y2="602.5" stroke="#333" stroke-width="1" />
<line x1="1845" y1="593.5" x2="1849.5" y2="593.5" stroke="#333" stroke-width="1" />
<line x1="1845" y1="584.5" x2="1849.5" y2="584.5" stroke="#333" stroke-width="1" />
<line x1="1845" y1="575.5" x2="1849.5" y2="575.5" stroke="#333" stroke-width="1" />
<line x1="1845" y1="566.5" x2="1849.5" y2="566.5" stroke="#333" stroke-width="1" />
<line x1="1835" y1="557.5" x2="1849.5" y2="557.5" stroke="#333" stroke-width="1" />
<line x1="1845" y1="548.5" x2="1849.5" y2="548.5" stroke="#333" stroke-width="1" />
<line x1="1845" y1="539.5" x2="1849.5" y2="539.5" stroke="#333" stroke-width="1" />
<line x1="1845" y1="530.5" x2="1849.5" y2="530.5" stroke="#333" stroke-width="1" />
<text x="1852.5" y="561.5" font-size="11" fill="#2b2b5e" textLength="32" lengthAdjust="spacingAndGlyphs" >0.250</text>
<text x="1852.5" y="652" font-size="11" fill="#2b2b5e" textLength="32" lengthAdjust="spacingAndGlyphs" >0.000</text>
<rect x="1850" y="590.5" width="34" height="15.2" fill="#8d97bd" />
<text x="1851.5" y="602.3" font-size="11" fill="#000" textLength="31" lengthAdjust="spacingAndGlyphs" >0.136</text>
<rect x="1850" y="656.4" width="39" height="15.5" fill="#0000e6" />
<text x="1851" y="668.3" font-size="11" fill="#ffff30" textLength="37" lengthAdjust="spacingAndGlyphs" >-0.048</text>
<g clip-path="url(#cmacd)">
<line x1="4" y1="598.5" x2="1834" y2="598.5" stroke="#8f9bc0" stroke-width="1" stroke-dasharray="3,3"/>
<rect x="8.5" y="647.5" width="4.8" height="2.3" fill="#000" />
<rect x="14.5" y="647.5" width="4.8" height="2.6" fill="#000" />
<rect x="20.6" y="647.5" width="4.8" height="2.9" fill="#000" />
<rect x="26.6" y="647.5" width="4.8" height="2.3" fill="#000" />
<rect x="32.7" y="647.5" width="4.8" height="1.3" fill="#000" />
<rect x="50.8" y="643.2" width="4.8" height="4.3" fill="#000" />
<rect x="56.9" y="639.5" width="4.8" height="8" fill="#000" />
<rect x="62.9" y="635.7" width="4.8" height="11.8" fill="#000" />
<rect x="69" y="631.8" width="4.8" height="15.7" fill="#000" />
<rect x="75" y="630.8" width="4.8" height="16.7" fill="#000" />
<rect x="81.1" y="630.5" width="4.8" height="17" fill="#000" />
<rect x="87.1" y="631.5" width="4.8" height="16" fill="#000" />
<rect x="93.2" y="634.2" width="4.8" height="13.3" fill="#000" />
<rect x="99.2" y="638.2" width="4.8" height="9.3" fill="#000" />
<rect x="105.3" y="641.9" width="4.8" height="5.6" fill="#000" />
<rect x="111.3" y="644.3" width="4.8" height="3.2" fill="#000" />
<rect x="117.3" y="647.5" width="4.8" height="1.7" fill="#000" />
<rect x="123.4" y="647.5" width="4.8" height="4.4" fill="#000" />
<rect x="129.5" y="647.5" width="4.8" height="7.5" fill="#000" />
<rect x="135.5" y="647.5" width="4.8" height="10.1" fill="#000" />
<rect x="141.6" y="647.5" width="4.8" height="12.8" fill="#000" />
<rect x="147.6" y="647.5" width="4.8" height="15.4" fill="#000" />
<rect x="153.7" y="647.5" width="4.8" height="15.2" fill="#000" />
<rect x="159.7" y="647.5" width="4.8" height="13.3" fill="#000" />
<rect x="165.8" y="647.5" width="4.8" height="12.2" fill="#000" />
<rect x="171.8" y="647.5" width="4.8" height="9.8" fill="#000" />
<rect x="177.9" y="647.5" width="4.8" height="7.5" fill="#000" />
<rect x="183.9" y="647.5" width="4.8" height="5.2" fill="#000" />
<rect x="190" y="647.5" width="4.8" height="3.2" fill="#000" />
<rect x="196" y="647.5" width="4.8" height="1.5" fill="#000" />
<rect x="208.1" y="644.2" width="4.8" height="3.3" fill="#000" />
<rect x="214.2" y="644.5" width="4.8" height="3" fill="#000" />
<rect x="226.3" y="647.5" width="4.8" height="3.4" fill="#000" />
<rect x="232.3" y="647.5" width="4.8" height="6.8" fill="#000" />
<rect x="238.4" y="647.5" width="4.8" height="10.2" fill="#000" />
<rect x="244.4" y="647.5" width="4.8" height="14.5" fill="#000" />
<rect x="250.5" y="647.5" width="4.8" height="16.7" fill="#000" />
<rect x="256.5" y="647.5" width="4.8" height="16.5" fill="#000" />
<rect x="262.6" y="647.5" width="4.8" height="12.5" fill="#000" />
<rect x="268.6" y="647.5" width="4.8" height="9.2" fill="#000" />
<rect x="274.7" y="647.5" width="4.8" height="7.1" fill="#000" />
<rect x="280.7" y="647.5" width="4.8" height="4.1" fill="#000" />
<rect x="286.8" y="647.5" width="4.8" height="1.5" fill="#000" />
<rect x="298.9" y="644.1" width="4.8" height="3.4" fill="#000" />
<rect x="304.9" y="643.5" width="4.8" height="4" fill="#000" />
<rect x="311" y="644.9" width="4.8" height="2.6" fill="#000" />
<rect x="317" y="647.5" width="4.8" height="8.8" fill="#000" />
<rect x="323.1" y="647.5" width="4.8" height="17.4" fill="#000" />
<rect x="329.1" y="647.5" width="4.8" height="22.7" fill="#000" />
<rect x="335.2" y="647.5" width="4.8" height="24.4" fill="#000" />
<rect x="341.2" y="647.5" width="4.8" height="22.1" fill="#000" />
<rect x="347.3" y="647.5" width="4.8" height="17.9" fill="#000" />
<rect x="353.3" y="647.5" width="4.8" height="11.9" fill="#000" />
<rect x="359.4" y="647.5" width="4.8" height="2.9" fill="#000" />
<rect x="365.4" y="644" width="4.8" height="3.5" fill="#000" />
<rect x="371.5" y="641.6" width="4.8" height="5.9" fill="#000" />
<rect x="377.5" y="643.7" width="4.8" height="3.8" fill="#000" />
<rect x="383.6" y="646.3" width="4.8" height="1.2" fill="#000" />
<rect x="395.7" y="646.8" width="4.8" height="0.7" fill="#000" />
<rect x="401.7" y="647.5" width="4.8" height="5.8" fill="#000" />
<rect x="407.8" y="647.5" width="4.8" height="6.6" fill="#000" />
<rect x="413.8" y="647.5" width="4.8" height="5.6" fill="#000" />
<rect x="419.9" y="647.5" width="4.8" height="4.1" fill="#000" />
<rect x="432" y="645.5" width="4.8" height="2" fill="#000" />
<rect x="438" y="643.4" width="4.8" height="4.1" fill="#000" />
<rect x="444.1" y="641.6" width="4.8" height="5.9" fill="#000" />
<rect x="450.1" y="637.2" width="4.8" height="10.3" fill="#000" />
<rect x="456.2" y="645" width="4.8" height="2.5" fill="#000" />
<rect x="462.2" y="647.5" width="4.8" height="6.4" fill="#000" />
<rect x="468.3" y="647.5" width="4.8" height="10.3" fill="#000" />
<rect x="474.3" y="647.5" width="4.8" height="11.7" fill="#000" />
<rect x="480.4" y="647.5" width="4.8" height="11.1" fill="#000" />
<rect x="486.4" y="647.5" width="4.8" height="9" fill="#000" />
<rect x="492.5" y="647.5" width="4.8" height="12.7" fill="#000" />
<rect x="498.5" y="647.5" width="4.8" height="17.4" fill="#000" />
<rect x="504.6" y="647.5" width="4.8" height="20.7" fill="#000" />
<rect x="510.6" y="647.5" width="4.8" height="25.5" fill="#000" />
<rect x="516.7" y="647.5" width="4.8" height="34.5" fill="#000" />
<rect x="522.7" y="647.5" width="4.8" height="38.4" fill="#000" />
<rect x="528.8" y="647.5" width="4.8" height="36.5" fill="#000" />
<rect x="534.8" y="647.5" width="4.8" height="29.1" fill="#000" />
<rect x="540.9" y="647.5" width="4.8" height="25.2" fill="#000" />
<rect x="546.9" y="647.5" width="4.8" height="20.2" fill="#000" />
<rect x="553" y="647.5" width="4.8" height="10.5" fill="#000" />
<rect x="559" y="647.5" width="4.8" height="2.4" fill="#000" />
<rect x="565.1" y="644.4" width="4.8" height="3.1" fill="#000" />
<rect x="571.1" y="641.9" width="4.8" height="5.6" fill="#000" />
<rect x="577.2" y="639.1" width="4.8" height="8.4" fill="#000" />
<rect x="583.2" y="636" width="4.8" height="11.5" fill="#000" />
<rect x="589.3" y="634.1" width="4.8" height="13.4" fill="#000" />
<rect x="595.3" y="631.7" width="4.8" height="15.8" fill="#000" />
<rect x="601.4" y="628.8" width="4.8" height="18.7" fill="#000" />
<rect x="607.4" y="623.9" width="4.8" height="23.6" fill="#000" />
<rect x="613.5" y="621.4" width="4.8" height="26.1" fill="#000" />
<rect x="619.5" y="617.1" width="4.8" height="30.4" fill="#000" />
<rect x="625.6" y="613.1" width="4.8" height="34.4" fill="#000" />
<rect x="631.6" y="610" width="4.8" height="37.5" fill="#000" />
<rect x="637.7" y="609.3" width="4.8" height="38.2" fill="#000" />
<rect x="643.7" y="611.4" width="4.8" height="36.1" fill="#000" />
<rect x="649.8" y="616.9" width="4.8" height="30.6" fill="#000" />
<rect x="655.8" y="623.5" width="4.8" height="24" fill="#000" />
<rect x="661.9" y="629.5" width="4.8" height="18" fill="#000" />
<rect x="667.9" y="634.5" width="4.8" height="13" fill="#000" />
<rect x="674" y="637.7" width="4.8" height="9.8" fill="#000" />
<rect x="680" y="643.7" width="4.8" height="3.8" fill="#000" />
<rect x="686.1" y="647.5" width="4.8" height="1.5" fill="#000" />
<rect x="692.1" y="647.5" width="4.8" height="4.6" fill="#000" />
<rect x="698.2" y="647.5" width="4.8" height="7.4" fill="#000" />
<rect x="704.2" y="647.5" width="4.8" height="10.7" fill="#000" />
<rect x="710.3" y="647.5" width="4.8" height="16.7" fill="#000" />
<rect x="716.3" y="647.5" width="4.8" height="20.7" fill="#000" />
<rect x="722.4" y="647.5" width="4.8" height="17.8" fill="#000" />
<rect x="728.4" y="647.5" width="4.8" height="13.7" fill="#000" />
<rect x="734.5" y="647.5" width="4.8" height="9.2" fill="#000" />
<rect x="740.5" y="647.5" width="4.8" height="3.8" fill="#000" />
<rect x="752.6" y="643.1" width="4.8" height="4.4" fill="#000" />
<rect x="758.7" y="641" width="4.8" height="6.5" fill="#000" />
<rect x="764.7" y="640" width="4.8" height="7.5" fill="#000" />
<rect x="770.8" y="639.1" width="4.8" height="8.4" fill="#000" />
<rect x="776.8" y="638.7" width="4.8" height="8.8" fill="#000" />
<rect x="782.9" y="636.5" width="4.8" height="11" fill="#000" />
<rect x="788.9" y="635.5" width="4.8" height="12" fill="#000" />
<rect x="795" y="637.9" width="4.8" height="9.6" fill="#000" />
<rect x="801" y="642.7" width="4.8" height="4.8" fill="#000" />
<rect x="807.1" y="646.2" width="4.8" height="1.3" fill="#000" />
<rect x="819.2" y="644.8" width="4.8" height="2.7" fill="#000" />
<rect x="825.2" y="633.8" width="4.8" height="13.7" fill="#000" />
<rect x="831.3" y="630.3" width="4.8" height="17.2" fill="#000" />
<rect x="837.3" y="632.1" width="4.8" height="15.4" fill="#000" />
<rect x="843.4" y="635.3" width="4.8" height="12.2" fill="#000" />
<rect x="849.4" y="637.7" width="4.8" height="9.8" fill="#000" />
<rect x="855.5" y="645.6" width="4.8" height="1.9" fill="#000" />
<rect x="861.5" y="647.5" width="4.8" height="2.5" fill="#000" />
<rect x="867.6" y="647.5" width="4.8" height="6.5" fill="#000" />
<rect x="873.6" y="647.5" width="4.8" height="10.1" fill="#000" />
<rect x="879.7" y="647.5" width="4.8" height="8.2" fill="#000" />
<rect x="885.7" y="647.5" width="4.8" height="5.7" fill="#000" />
<rect x="891.8" y="647.5" width="4.8" height="10.7" fill="#000" />
<rect x="897.8" y="647.5" width="4.8" height="14.7" fill="#000" />
<rect x="903.9" y="647.5" width="4.8" height="16.7" fill="#000" />
<rect x="909.9" y="647.5" width="4.8" height="16.6" fill="#000" />
<rect x="916" y="647.5" width="4.8" height="15.9" fill="#000" />
<rect x="922" y="647.5" width="4.8" height="13.7" fill="#000" />
<rect x="928.1" y="647.5" width="4.8" height="7.1" fill="#000" />
<rect x="934.1" y="647.5" width="4.8" height="4" fill="#000" />
<rect x="940.2" y="647.5" width="4.8" height="3.1" fill="#000" />
<rect x="946.2" y="647.5" width="4.8" height="4.5" fill="#000" />
<rect x="952.3" y="647.5" width="4.8" height="2.1" fill="#000" />
<rect x="964.4" y="646.2" width="4.8" height="1.3" fill="#000" />
<rect x="976.5" y="645.2" width="4.8" height="2.3" fill="#000" />
<rect x="982.5" y="645.9" width="4.8" height="1.6" fill="#000" />
<rect x="988.6" y="646.3" width="4.8" height="1.2" fill="#000" />
<rect x="1000.7" y="647.5" width="4.8" height="2.5" fill="#000" />
<rect x="1006.7" y="647.5" width="4.8" height="0.9" fill="#000" />
<rect x="1018.8" y="643.9" width="4.8" height="3.6" fill="#000" />
<rect x="1024.8" y="639.9" width="4.8" height="7.6" fill="#000" />
<rect x="1030.9" y="635.2" width="4.8" height="12.3" fill="#000" />
<rect x="1037" y="626.4" width="4.8" height="21.1" fill="#000" />
<rect x="1043" y="621.4" width="4.8" height="26.1" fill="#000" />
<rect x="1049" y="616.5" width="4.8" height="31" fill="#000" />
<rect x="1055.1" y="614.2" width="4.8" height="33.3" fill="#000" />
<rect x="1061.1" y="616.1" width="4.8" height="31.4" fill="#000" />
<rect x="1067.2" y="619.9" width="4.8" height="27.6" fill="#000" />
<rect x="1073.2" y="625" width="4.8" height="22.5" fill="#000" />
<rect x="1079.3" y="632.8" width="4.8" height="14.7" fill="#000" />
<rect x="1085.3" y="640.8" width="4.8" height="6.7" fill="#000" />
<rect x="1091.4" y="645.5" width="4.8" height="2" fill="#000" />
<rect x="1103.5" y="647.5" width="4.8" height="2.7" fill="#000" />
<rect x="1109.5" y="647.5" width="4.8" height="2.7" fill="#000" />
<rect x="1115.6" y="647.5" width="4.8" height="2.4" fill="#000" />
<rect x="1121.6" y="647.5" width="4.8" height="0.8" fill="#000" />
<rect x="1133.8" y="646" width="4.8" height="1.5" fill="#000" />
<rect x="1139.8" y="645.9" width="4.8" height="1.6" fill="#000" />
<rect x="1145.8" y="647.5" width="4.8" height="3.7" fill="#000" />
<rect x="1151.9" y="647.5" width="4.8" height="11.9" fill="#000" />
<rect x="1158" y="647.5" width="4.8" height="15.6" fill="#000" />
<rect x="1164" y="647.5" width="4.8" height="16.6" fill="#000" />
<rect x="1170" y="647.5" width="4.8" height="15.7" fill="#000" />
<rect x="1176.1" y="647.5" width="4.8" height="14.4" fill="#000" />
<rect x="1182.1" y="647.5" width="4.8" height="13.4" fill="#000" />
<rect x="1188.2" y="647.5" width="4.8" height="7.7" fill="#000" />
<rect x="1194.2" y="645.9" width="4.8" height="1.6" fill="#000" />
<rect x="1200.3" y="639.1" width="4.8" height="8.4" fill="#000" />
<line x1="4" y1="647.5" x2="1834" y2="647.5" stroke="#000" stroke-width="1.2" />
<line x1="4" y1="664.5" x2="1834" y2="664.5" stroke="#0000f0" stroke-width="1.2" />
<polyline points="5,617.3 20,618 33.4,619.6 50.1,621.3 61.8,619.6 76.8,613.6 90.2,606.3 103.5,598.6 115.2,594.2 125.3,593.6 137.6,595.9 149.6,600.9 161.7,607.6 173.7,613.6 185.7,618.6 197.7,622 210.4,623.6 222.5,623.6 233.8,624.3 247.2,628 258.9,633.7 270.6,640.3 282.6,646 293.9,649.4 306.6,650.4 315.7,650.4 325.7,654.7 336.7,661.4 348.7,669.7 360.8,677.1 373.4,680.4 385.5,681.1 397.5,680.4 409.5,680.4 421.5,682.8 433.6,684.4 445.6,683.8 457.6,683.1 469.6,684.4 481.7,686.4 493.7,689.8 501,693.8 509.4,701.1 527.8,720.5 561.2,737.2 601.3,733.9 631.3,713.8 636.7,720.4 650.1,702 660.1,690.4 671.8,678.7 681.8,671.3 687.5,668.6 696.9,668.6 706.9,670.3 717.9,676 729.9,683.7 742,691 754,695.4 763.7,696.4 778,693 790.1,688.7 802.1,684.3 814.1,682 820.1,681.3 833.2,675.3 845.2,671.3 857.2,667.6 869.2,665.3 881.3,666 893.3,671 905.3,678.7 917.3,685.3 929.4,691 941.4,696.4 952.4,702 967.4,708.7 994.2,713.7 1017.5,710.4 1034.2,702 1047.6,695.4 1057,687 1069,673.7 1081,660.3 1093,652.6 1105.1,649.6 1117.1,648.9 1129.1,649.6 1141.1,650.3 1153.2,651.9 1165.2,657 1177.2,663.6 1189.2,670.3 1201.3,674.3" fill="none" stroke="#1010ff" stroke-width="1.1" />
<polyline points="5,620.3 20,621 28.4,623.6 43.4,622 53.4,615.3 65.1,605.3 76.8,595.2 88.5,590.9 96.9,589.9 106.9,590.9 116.9,593.6 126.9,599.6 137.6,606.9 149.6,616.3 161.7,620.3 173.7,624.6 185.7,625.3 197.7,624.3 207.1,622.6 212.1,620.3 220.5,623 230.5,630.3 240.5,637 248.9,646 258.9,651.4 270.6,651.4 283.9,650.4 293.9,650.4 306.6,646 314,645.3 319,657 325.7,670.4 334,680.4 342.7,686.4 354.7,686.1 362.4,679.4 373.4,673.7 382.5,678.7 391.5,682.1 397.5,680.4 404.2,685.4 415.5,687.8 421.5,687.8 430.9,683.8 444.3,678.7 452.6,673.1 459.3,680.4 464.3,688.8 472.7,694.4 481.7,698.8 487.7,697.8 493.7,701.1 501,710.5 521.1,733.9 547.8,747.2 587.9,743.9 614.6,717.2 624.6,701.1 625.1,702 633.4,688.7 643.4,673.7 651.8,668 663.5,666.3 676.8,665.3 687.5,670.3 696.9,676.3 705.9,682 715.2,693.7 723.9,700.4 735.9,699.7 743.6,696.4 750.3,696 757,691 767,688.7 778,686 784.1,682 792.1,676 800.4,677 808.1,681.3 820.1,681.3 827.1,667 833.2,658.6 839.2,658 850.5,660.3 857.2,665.3 863.2,669.3 869.2,672 877.2,677 887.3,675.3 893.3,682 899.3,689.7 907.3,697 915.7,702 922.3,704.4 930.7,702 935.7,699.7 940.7,702 954.1,707.1 967.4,705.4 979.1,701.4 987.5,705.4 1004.2,707.1 1020.2,702 1032.9,693.7 1044.9,673.7 1050.9,662 1057,651.9 1066,646.3 1074.3,642.9 1081,644.3 1087,646.9 1093,648.6 1101,651.3 1107.7,652.6 1117.7,651.9 1124.4,649.6 1134.4,649.6 1142.8,650.3 1147.8,655.3 1153.2,665.3 1161.2,672 1171.2,675.3 1179.5,678.7 1186.2,682.7 1192.9,680.3 1197.9,673.7 1201.9,667" fill="none" stroke="#ff1010" stroke-width="1.1" />
</g>
<line x1="1834" y1="647.5" x2="1849.5" y2="647.5" stroke="#777" stroke-width="1" />
<text x="12.5" y="536.5" font-size="11" fill="#ff0000" textLength="186" lengthAdjust="spacingAndGlyphs" >MACD(USD/JPY.Close, 12, 26, 9)</text>
<text x="209" y="536.5" font-size="11" fill="#ff0000" textLength="81" lengthAdjust="spacingAndGlyphs" >MACD: -0.054</text>
<text x="298" y="536.5" font-size="11" fill="#0000ff" textLength="90" lengthAdjust="spacingAndGlyphs" >SIGNAL: -0.075</text>
<text x="396" y="536.5" font-size="11" fill="#000" textLength="111" lengthAdjust="spacingAndGlyphs" >HISTOGRAM: 0.021</text>
<rect x="1214.5" y="680.6" width="141" height="18.6" fill="url(#gl)" stroke="#222" stroke-width="1"/>
<text x="1285" y="695.6" font-size="16" fill="#000" textLength="128.6" lengthAdjust="spacingAndGlyphs" text-anchor="middle" font-weight="bold" font-family='DejaVu Sans Condensed, DejaVu Sans, sans-serif' >Phan ky duong</text>
</g>
<g id="rsi">
<rect x="4" y="711" width="1832" height="1.6" fill="#dde4ee" />
<rect x="4" y="836.9" width="1832" height="1.6" fill="#dde4ee" />
<rect x="1834" y="711" width="1.8" height="127.5" fill="#c5cfdf" />
<rect x="4" y="839.7" width="1903" height="3.2" fill="#c3cddd" />
<line x1="1849.5" y1="714" x2="1849.5" y2="835" stroke="#333" stroke-width="1" />
<line x1="1836" y1="832.5" x2="1849.5" y2="832.5" stroke="#555" stroke-width="1" />
<line x1="1845" y1="821.5" x2="1849.5" y2="821.5" stroke="#333" stroke-width="1" />
<line x1="1845" y1="809.5" x2="1849.5" y2="809.5" stroke="#333" stroke-width="1" />
<line x1="1843" y1="798.5" x2="1849.5" y2="798.5" stroke="#333" stroke-width="1" />
<line x1="1845" y1="786.5" x2="1849.5" y2="786.5" stroke="#333" stroke-width="1" />
<line x1="1836" y1="775.5" x2="1849.5" y2="775.5" stroke="#555" stroke-width="1" />
<line x1="1845" y1="764.5" x2="1849.5" y2="764.5" stroke="#333" stroke-width="1" />
<line x1="1843" y1="752.5" x2="1849.5" y2="752.5" stroke="#333" stroke-width="1" />
<line x1="1845" y1="741.5" x2="1849.5" y2="741.5" stroke="#333" stroke-width="1" />
<line x1="1845" y1="729.5" x2="1849.5" y2="729.5" stroke="#333" stroke-width="1" />
<line x1="1836" y1="718.5" x2="1849.5" y2="718.5" stroke="#555" stroke-width="1" />
<g clip-path="url(#crsi)">
<text x="12.5" y="723.8" font-size="11" fill="#000" textLength="176" lengthAdjust="spacingAndGlyphs" >RSI(USD/JPY.Close, 14): 54.61</text>
<line x1="4" y1="718.5" x2="1834" y2="718.5" stroke="#000" stroke-width="1.2" />
<line x1="4" y1="752.5" x2="1834" y2="752.5" stroke="#f04040" stroke-width="1" />
<line x1="4" y1="775.5" x2="1834" y2="775.5" stroke="#000" stroke-width="1.2" />
<line x1="4" y1="798.5" x2="1834" y2="798.5" stroke="#f04040" stroke-width="1" />
<line x1="4" y1="832.5" x2="1834" y2="832.5" stroke="#000" stroke-width="1.2" />
<polyline points="4,767.5 10,763.5 16,762.5 22,765.8 28.1,765.8 34.1,761.1 40.1,761.8 46.1,758.5 53.4,750.8 60.1,747.4 66.8,745.1 73.5,742.1 83.5,741.8 95.2,741.8 100.2,744.1 106.9,743.4 113.6,747.8 119.6,755.1 125.6,757.5 131.6,757.8 137.6,761.8 143.6,766.1 149.6,776.8 155.3,766.8 161.3,764.5 167.3,770.8 173.4,769.1 182,763.8 192.1,763.5 198.1,760.8 204.1,762.5 210.1,752.8 216.1,765.1 222.1,772.8 228.1,776.2 234.2,776.8 240.2,780.2 246.2,789.2 252.2,785.2 258.9,784.5 264.9,776.2 270.9,776.8 276.9,777.8 283.9,777.5 293.9,776.2 302.3,769.1 307.3,769.1 313.3,771.8 319.3,799.2 325.3,802.5 331.4,798.5 337.4,797.9 343.4,790.2 349.4,787.5 355.4,787.5 361.4,776.2 367.4,778.5 373.4,781.8 379.5,787.8 385.5,790.9 391.5,789.5 397.5,781.2 404.2,792.9 410.9,786.2 421.5,785.8 427.6,782.8 437.6,782.2 447.6,781.2 452.6,773.5 458.3,788.5 464.3,795.2 470.3,790.9 477.7,789.2 482.7,788.5 488,785.8 494.4,793.5 501,799.2 507.7,801.9 511.7,801.9 519.4,807.9 526.1,807.6 532.1,806.9 537.8,797.5 544.5,801.2 549.5,801.9 556.2,795.2 562.8,795.9 571.9,797.9 577.9,797.9 586.2,794.5 592.9,793.5 597.9,790.9 603.9,791.9 609.6,782.5 615.6,784.5 620,778.5 626.7,774.2 636.7,770.8 643.4,771.8 651.7,776.2 658.4,780.8 670.1,780.8 676.1,777.5 683.5,785.2 696.8,790.9 706.2,791.9 712.9,800.2 718.5,800.2 724.6,791.9 731.9,789.5 736.9,789.2 741.9,786.8 748.6,789.5 754.6,782.5 760.3,785.8 767,784.8 779.7,784.8 787,778.5 791.4,776.2 797,783.5 803.7,790.9 809.7,790.9 815.4,787.5 821.4,784.2 827.1,761.1 833.8,770.1 839.5,777.8 845.5,779.2 851.5,779.2 857.2,785.8 863.8,785.8 870.5,785.8 876.5,787.8 882.5,781.2 888.6,780.8 894.6,790.9 900.6,793.5 913.9,793.9 919,795.2 924,795.2 930,785.2 936,785.8 942,791.2 948,795.2 954,790.9 960,787.8 966.1,789.2 972.1,791.9 979.1,785.8 985.1,790.2 990.8,789.5 997.5,793.5 1003.5,795.2 1010.8,789.2 1020.8,785.8 1026.8,784.8 1034.2,778.5 1039.2,768.5 1044.9,769.5 1052.6,764.5 1057.6,764.5 1063.6,768.5 1069.3,769.1 1075.9,771.1 1082,777.5 1087.6,780.2 1094.3,779.8 1101,777.5 1106,779.5 1112,776.2 1118.4,777.5 1124.4,770.8 1130.1,777.5 1136.1,774.8 1141.8,775.2 1147.8,784.2 1154.4,793.5 1160.5,789.5 1166.5,786.2 1172.8,785.5 1178.5,787.5 1184.5,790.9 1190.5,783.5 1196.5,771.8 1202.5,770.5" fill="none" stroke="#000" stroke-width="2.2" stroke-linejoin="round"/>
<line x1="990" y1="801.2" x2="1244" y2="790.2" stroke="#2020e0" stroke-width="1.2" />
</g>
<rect x="1852" y="713.6" width="21" height="12" fill="#a0a0a0" />
<text x="1852.5" y="723.2" font-size="11" fill="#000" textLength="20" lengthAdjust="spacingAndGlyphs" >100</text>
<rect x="1852" y="747.5" width="14" height="12" fill="#ff5050" />
<text x="1852.5" y="756.8" font-size="11" fill="#000" textLength="13" lengthAdjust="spacingAndGlyphs" >70</text>
<rect x="1852" y="770.4" width="14" height="12" fill="#a0a0a0" />
<text x="1852.5" y="779.8" font-size="11" fill="#000" textLength="13" lengthAdjust="spacingAndGlyphs" >50</text>
<rect x="1852" y="793.4" width="14" height="12" fill="#ff5050" />
<text x="1852.5" y="802.8" font-size="11" fill="#000" textLength="13" lengthAdjust="spacingAndGlyphs" >30</text>
<rect x="1852" y="827.3" width="7" height="11" fill="#a0a0a0" />
<text x="1852.5" y="836.6" font-size="11" fill="#000" textLength="6.5" lengthAdjust="spacingAndGlyphs" >0</text>
</g>
<g id="stoch">
<rect x="4" y="846" width="1832" height="1.6" fill="#dde4ee" />
<rect x="4" y="906.2" width="1832" height="1.6" fill="#dde4ee" />
<rect x="1834" y="846" width="1.8" height="61.8" fill="#c5cfdf" />
<rect x="4" y="909.3" width="1903" height="3" fill="#c3cddd" />
<line x1="1849.5" y1="848" x2="1849.5" y2="905" stroke="#333" stroke-width="1" />
<line x1="1836" y1="903.5" x2="1849.5" y2="903.5" stroke="#555" stroke-width="1" />
<line x1="1845" y1="892.5" x2="1849.5" y2="892.5" stroke="#555" stroke-width="1" />
<line x1="1845" y1="882.5" x2="1849.5" y2="882.5" stroke="#555" stroke-width="1" />
<line x1="1845" y1="871.5" x2="1849.5" y2="871.5" stroke="#555" stroke-width="1" />
<line x1="1845" y1="861.5" x2="1849.5" y2="861.5" stroke="#555" stroke-width="1" />
<line x1="1836" y1="850.5" x2="1849.5" y2="850.5" stroke="#555" stroke-width="1" />
<g clip-path="url(#cst)">
<text x="12.5" y="858" font-size="11" fill="#2020ff" textLength="252" lengthAdjust="spacingAndGlyphs" >STOCHASTIC(USD/JPY, 10, 3, 3, MVA, MVA)</text>
<text x="275" y="858" font-size="11" fill="#2020ff" textLength="48" lengthAdjust="spacingAndGlyphs" >K: 66.39</text>
<text x="332" y="858" font-size="11" fill="#ff2020" textLength="49" lengthAdjust="spacingAndGlyphs" >D: 44.12</text>
<line x1="4" y1="850.5" x2="1834" y2="850.5" stroke="#000" stroke-width="1.2" />
<line x1="4" y1="860.5" x2="1834" y2="860.5" stroke="#f04040" stroke-width="1" />
<line x1="4" y1="893.5" x2="1834" y2="893.5" stroke="#f04040" stroke-width="1" />
<line x1="4" y1="903.5" x2="1834" y2="903.5" stroke="#000" stroke-width="1.2" />
<polyline points="4,866 16,873 28.1,875.4 36.7,873.7 46.8,863.7 55.1,857 66.8,854.7 100.2,854.7 116.9,860.3 131.6,870.4 143.6,879.4 155.7,888.1 161.3,890.4 170.4,887.1 182,878.7 192.1,867 200.4,858.7 208.8,856.3 217.1,859.7 225.5,873.7 234.2,887.1 242.2,894.4 252.2,896.4 260.5,894.7 270.9,888.7 283.9,879.7 297.3,870.4 307.3,861.3 314,857 320.7,863.7 329,880.4 337.4,893.1 343.4,893.7 355.4,888.7 367.4,880.4 375.8,876.4 385.5,882 397.5,887.1 410.9,886.4 421.5,887.1 434.2,883.7 447.6,875.4 454.3,869.4 462.6,872 470.3,885.4 477.7,894.4 482.7,897.1 491,893.7 501,892.7 511.7,896.1 524.4,899.7 537.8,897.1 551.1,895.4 564.5,893.1 577.9,891.1 592.9,887.1 603.9,882 615.6,870.4 620,866 630,860.3 640,856.3 648.4,855.3 655.1,859.7 663.4,870.4 673.4,878.7 683.5,883 691.8,887.1 701.8,893.7 711.9,898.7 720.2,900.4 728.6,897.1 736.9,891.4 748.6,885.4 760.3,878.7 770.3,872 779.7,869.4 788.7,866.3 797,862.7 803.7,867 812.1,880.4 820.4,888.1 827.1,883 833.8,875.4 840.5,868.7 847.1,872 853.8,878.7 862.2,886.4 870.5,892.1 882.5,894.4 894.6,893.1 907.3,894.7 919,896.1 927.3,893.7 936,889.4 942,886.4 948,889.7 954,893.1 960.7,891.4 969.1,887.7 979.1,887.7 987.4,892.1 997.5,894.7 1003.5,896.1 1010.8,894.4 1017.5,891.1 1026.8,883 1034.2,875.4 1042.5,865.3 1050.9,858 1060.9,856 1069.3,857 1075.9,859.7 1082,864.3 1087.6,871 1094.3,879.4 1101,886.4 1107.7,891.4 1114.4,892.1 1121,888.7 1127.7,885.4 1136.1,881.4 1144.4,881.4 1151.1,885.4 1157.8,891.4 1164.5,894.7 1172.8,891.4 1181.2,889.4 1191.2,889.4 1196.5,887.1 1201.9,881.4" fill="none" stroke="#ff1010" stroke-width="1.1" />
<polyline points="4,872 16,872.7 28.1,878 34.1,872 43.4,860.3 50.1,856.3 60.1,854.3 83.5,854.3 100.2,855.3 113.6,860.3 125.6,871 137.6,878 143.6,882 149.6,890.4 155.7,892.7 161.3,887.7 167.3,881.4 173.4,878.7 182,873 192.1,859.7 198.1,856.3 207.1,856 213.8,860.3 220.5,870.4 228.1,887.1 234.2,893.1 240.2,895.4 246.2,897.1 252.2,895.4 258.9,894.7 264.9,887.7 270.9,885.4 276.9,879.7 283.9,873.7 290.6,870.4 297.3,864.3 304,858 310.6,855.3 315.7,863.7 320.7,873.7 325.7,885.4 331.4,896.4 337.4,895.4 343.4,889.7 349.4,886.4 355.4,883.7 361.4,878.7 367.4,875.4 373.4,874.4 379.5,880.4 385.5,886.4 391.5,888.7 397.5,886.4 404.2,886.1 410.9,885.4 415.9,888.7 421.5,885.4 427.6,883 434.2,880.4 440.9,875.4 447.6,871 452.6,863.7 458.3,873.7 464.3,885.4 470.3,899.4 477.7,896.4 482.7,893.7 488,891.4 494.4,893.7 501,893.1 507.7,897.7 514.4,898.7 519.4,899.7 526.1,899.7 532.1,897.1 537.8,894.4 544.5,893.7 549.5,894.4 556.2,894.7 562.8,890.4 567.8,888.1 571.9,890.4 577.9,890.4 586.2,888.7 592.9,884.7 597.9,882 603.9,879.4 609.6,870.4 615.6,866.3 620,861 626.7,859.7 633.4,855.3 640,854.3 646.7,855.3 653.4,859.7 661.8,870.4 670.1,880.4 676.8,882 683.5,884.7 690.1,888.7 698.5,896.4 706.2,899.4 715.2,901.1 724.6,897.7 731.9,892.1 741.9,886.4 748.6,884.7 754.6,878 760.3,875.4 767,868.7 773.7,870.4 779.7,867.7 787,864.3 792,860.3 797,864.7 803.7,877 809.7,888.1 815.4,888.7 821.4,884.7 827.1,873.7 833.8,867 838.8,866 845.5,877 851.5,882 857.2,887.7 863.8,891.4 870.5,894.7 876.5,894.7 882.5,893.7 888.6,892.7 894.6,893.7 900.6,895.4 907.3,897.1 913.9,895.4 924,893.7 930,889.4 936,884.4 942,886.4 948,893.7 954,894.7 960,889.4 966.1,884.4 972.1,888.7 979.1,889.4 985.1,894.4 990.8,893.7 997.5,897.1 1003.5,895.4 1010.8,892.7 1015.8,889.7 1020.8,883 1026.8,877 1034.2,868.7 1039.2,861.3 1044.9,857.7 1052.6,855.3 1057.6,856.3 1063.6,856 1069.3,858.7 1075.9,863.7 1082,870.4 1087.6,878 1094.3,885.4 1101,890.4 1106,893.1 1112,892.1 1118.4,891.4 1124.4,882 1130.1,883 1136.1,879.4 1141.8,882 1147.8,886.4 1154.4,893.1 1160.5,898.1 1166.5,892.1 1172.8,888.7 1178.5,888.1 1184.5,890.4 1190.5,889.7 1196.5,880.4 1202.5,869.4" fill="none" stroke="#1010ff" stroke-width="1.1" />
</g>
<rect x="1852" y="855.5" width="14" height="11" fill="#ff5050" />
<text x="1852.5" y="864.5" font-size="11" fill="#000" textLength="13" lengthAdjust="spacingAndGlyphs" >80</text>
<rect x="1852" y="845.6" width="21" height="11.6" fill="#a0a0a0" />
<text x="1852.5" y="856" font-size="11" fill="#000" textLength="20" lengthAdjust="spacingAndGlyphs" >100</text>
<rect x="1852" y="888.3" width="14" height="12" fill="#ff5050" />
<text x="1852.5" y="898.4" font-size="11" fill="#000" textLength="13" lengthAdjust="spacingAndGlyphs" >20</text>
<rect x="1852" y="900.3" width="7" height="8" fill="#a0a0a0" />
<text x="1852.5" y="908" font-size="11" fill="#000" textLength="6.5" lengthAdjust="spacingAndGlyphs" >0</text>
<rect x="1202.1" y="882.2" width="43" height="17.5" fill="url(#gl)"/>
<text x="1223.6" y="896.7" font-size="16" fill="#000" textLength="32" lengthAdjust="spacingAndGlyphs" text-anchor="middle" font-weight="bold" font-family='DejaVu Sans Condensed, DejaVu Sans, sans-serif' >Buy</text>
</g>
<g id="adx">
<rect x="4" y="914.5" width="1832" height="1.6" fill="#dde4ee" />
<rect x="4" y="936.2" width="1832" height="1.6" fill="#dde4ee" />
<rect x="1834" y="914.5" width="1.8" height="23.3" fill="#c5cfdf" />
<line x1="1849.5" y1="917" x2="1849.5" y2="936" stroke="#333" stroke-width="1" />
<line x1="1845" y1="924.5" x2="1849.5" y2="924.5" stroke="#333" stroke-width="1" />
<line x1="1845" y1="931.5" x2="1849.5" y2="931.5" stroke="#333" stroke-width="1" />
<g clip-path="url(#cadx)">
<text x="12.5" y="926.5" font-size="11" fill="#000" textLength="143" lengthAdjust="spacingAndGlyphs" >ADX(USD/JPY, 14): 20.36</text>
<line x1="4" y1="924.5" x2="1834" y2="924.5" stroke="#8f9bc0" stroke-width="1" />
<polyline points="4,929.8 16,929.5 28.1,928.8 40.1,927.1 53.4,924.5 66.8,922.1 76.8,918.8 90.2,916.5 100.2,917.8 113.6,920.5 125.6,923.1 137.6,924.8 149.6,926.5 161.3,927.8 173.4,928.8 182,930.5 192.1,931.1 204.1,929.8 216.1,927.8 228.1,929.8 240.2,929.8 252.2,928.8 264.9,930.5 283.9,931.1 307.3,931.5 331.4,931.5 349.4,932.2 367.4,930.5 397.5,930.5 409.5,929.8 421.5,931.5 440.9,932.8 461,933.2 477.7,934.5 494.4,933.8 507.7,930.5 521.1,927.8 532.1,926.1 544.5,926.5 562.8,927.8 577.9,926.5 592.9,925.5 603.9,926.5 611.3,928.8 619.6,928.8 620,928.8 633.4,928.1 643.4,927.1 653.4,928.8 670.1,931.1 696.8,931.1 712.9,927.1 724.6,927.1 736.9,929.5 754.6,932.2 773.7,933.2 803.7,933.2 827.1,932.2 853.8,932.2 870.5,929.8 894.6,929.5 913.9,926.5 930,925.5 954,926.5 972.1,925.5 990.8,925.5 1004.1,923.8 1014.2,923.8 1026.8,927.1 1044.9,926.1 1063.6,925.5 1082,927.8 1101,929.8 1118.4,930.5 1136.1,931.5 1154.4,930.5 1172.8,931.1 1184.5,930.5 1202.5,931.5" fill="none" stroke="#000" stroke-width="2.6" stroke-linejoin="round"/>
</g>
<rect x="1850" y="916.5" width="34" height="15" fill="#8d97c8" />
<text x="1850.5" y="928.3" font-size="11" fill="#000" textLength="32" lengthAdjust="spacingAndGlyphs" >43.17</text>
</g>
<text x="1594.5" y="871.5" font-size="18" fill="#b9b9b9" textLength="156.5" lengthAdjust="spacingAndGlyphs" font-family='Liberation Sans, sans-serif' >Activate Windows</text>
<text x="1594.5" y="892.5" font-size="13.5" fill="#bdbdbd" textLength="234.5" lengthAdjust="spacingAndGlyphs" font-family='Liberation Sans, sans-serif' >Go to Settings to activate Windows.</text>
<g id="legend">
<rect x="23" y="91" width="10" height="17.7" fill="#3a7d3a" />
<line x1="26.5" y1="92" x2="26.5" y2="108" stroke="#fff" stroke-width="1" stroke-dasharray="2,2"/>
<rect x="33" y="91" width="36.6" height="17.7" fill="#d9c2ea" />
<text x="38.7" y="104" font-size="11" fill="#bfa3d6" textLength="25" lengthAdjust="spacingAndGlyphs" >Limit</text>
<rect x="12.7" y="75.2" width="234.3" height="29.8" fill="#dfdfe6" opacity="0.72"/>
<text x="14.6" y="95.8" font-size="14.5" fill="#383866" textLength="8.6" lengthAdjust="spacingAndGlyphs" font-family='Liberation Sans, sans-serif' >S</text>
<text x="33.2" y="97.2" font-size="11.5" fill="#000" textLength="19" lengthAdjust="spacingAndGlyphs" font-weight="bold" font-family='Liberation Sans, sans-serif' >110</text>
<text x="61.8" y="97.2" font-size="22.7" fill="#000" font-weight="bold" textLength="26.5" lengthAdjust="spacing" font-family="Liberation Sans, sans-serif">69</text>
<text x="92.5" y="89.7" font-size="11.5" fill="#000" textLength="6.5" lengthAdjust="spacingAndGlyphs" font-weight="bold" font-family='Liberation Sans, sans-serif' >9</text>
<rect x="105.6" y="80.5" width="49" height="19" fill="#fff" stroke="#dedee4" stroke-width="1"/>
<text x="107.2" y="94.3" font-size="10.5" fill="#d4c8cc" font-family='Liberation Sans, sans-serif' >1</text>
<path d="M146.8 89 L151 89 L148.9 91.3 Z" fill="#d0d0d8"/>
<text x="161.5" y="97.2" font-size="11.5" fill="#000" textLength="19.5" lengthAdjust="spacingAndGlyphs" font-weight="bold" font-family='Liberation Sans, sans-serif' >110</text>
<text x="190.2" y="97.2" font-size="22.7" fill="#000" font-weight="bold" textLength="26" lengthAdjust="spacing" font-family="Liberation Sans, sans-serif">71</text>
<text x="221.5" y="89.7" font-size="11.5" fill="#000" textLength="5.5" lengthAdjust="spacingAndGlyphs" font-weight="bold" font-family='Liberation Sans, sans-serif' >1</text>
<text x="236.6" y="95.8" font-size="14.5" fill="#383866" textLength="8" lengthAdjust="spacingAndGlyphs" font-family='Liberation Sans, sans-serif' >B</text>
<text x="12.7" y="117" font-size="11" fill="#303050" textLength="91" lengthAdjust="spacingAndGlyphs" >[Template: huy]</text>
<text x="12.7" y="130" font-size="11" fill="#008000" textLength="190" lengthAdjust="spacingAndGlyphs" >MVA(USD/JPY.Close,120): 111.08</text>
<text x="12.7" y="143" font-size="11" fill="#0000ff" textLength="183" lengthAdjust="spacingAndGlyphs" >MVA(USD/JPY.Close,50): 110.63</text>
<text x="12.7" y="156" font-size="11" fill="#ff0000" textLength="183" lengthAdjust="spacingAndGlyphs" >MVA(USD/JPY.Close,20): 110.58</text>
<text x="12.7" y="169" font-size="11" fill="#000" textLength="176" lengthAdjust="spacingAndGlyphs" >MVA(USD/JPY.Close,5): 110.49</text>
<text x="12.7" y="182" font-size="11" fill="#e8500c" textLength="144.5" lengthAdjust="spacingAndGlyphs" >BB(USD/JPY.Close, 20, 2)</text>
<text x="168.5" y="182" font-size="11" fill="#e8500c" textLength="67" lengthAdjust="spacingAndGlyphs" >TL: 110.891</text>
<text x="244.5" y="182" font-size="11" fill="#e8500c" textLength="68" lengthAdjust="spacingAndGlyphs" >BL: 110.260</text>
<text x="321" y="182" font-size="11" fill="#ff0000" textLength="68.5" lengthAdjust="spacingAndGlyphs" >AL: 110.576</text>
<text x="12.7" y="195" font-size="11" fill="#ff8000" textLength="190" lengthAdjust="spacingAndGlyphs" >MVA(USD/JPY.Close,200): 111.82</text>
</g>
</svg>
</body></html>
